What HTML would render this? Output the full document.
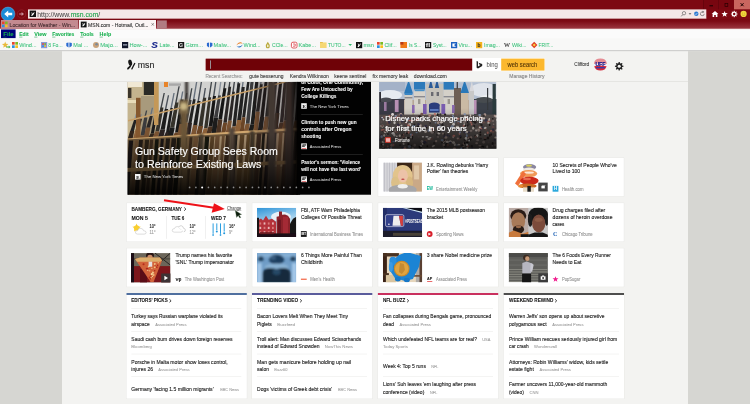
<!DOCTYPE html>
<html lang="en"><head><meta charset="utf-8"><title>MSN.com - Hotmail, Outlook</title>
<style>html,body{margin:0;padding:0;background:#f3f3f1;overflow:hidden}svg{display:block;will-change:transform}text{white-space:pre}</style>
</head><body>
<svg width="750" height="404" viewBox="0 0 750 404" font-family="'Liberation Sans', sans-serif">
<defs>
<linearGradient id="gtab" x1="0" y1="0" x2="0" y2="1"><stop offset="0" stop-color="#780610"/><stop offset="0.25" stop-color="#7e0c17"/><stop offset="1" stop-color="#9c3842"/></linearGradient>
<filter id="bl05" x="-5%" y="-5%" width="110%" height="110%"><feGaussianBlur stdDeviation="0.45"/></filter>
<filter id="bl1" x="-5%" y="-5%" width="110%" height="110%"><feGaussianBlur stdDeviation="0.8"/></filter>
<filter id="bl2" x="-5%" y="-5%" width="110%" height="110%"><feGaussianBlur stdDeviation="1.6"/></filter>
<clipPath id="pc1"><rect x="127.60" y="81.90" width="243.40" height="112.80"/></clipPath>
<linearGradient id="gblk" x1="0" y1="0" x2="1" y2="0"><stop offset="0" stop-color="#000" stop-opacity="0"/><stop offset="1" stop-color="#000" stop-opacity="1"/></linearGradient>
<linearGradient id="gbot" x1="0" y1="0" x2="0" y2="1"><stop offset="0" stop-color="#000" stop-opacity="0"/><stop offset="0.5" stop-color="#000" stop-opacity="0.4"/><stop offset="1" stop-color="#000" stop-opacity="0.9"/></linearGradient>
<clipPath id="pc2"><rect x="379.20" y="82.10" width="117.20" height="66.60"/></clipPath>
<linearGradient id="gdis" x1="0" y1="0" x2="0" y2="1"><stop offset="0" stop-color="#000" stop-opacity="0"/><stop offset="0.5" stop-color="#000" stop-opacity="0.3"/><stop offset="1" stop-color="#000" stop-opacity="0.72"/></linearGradient>
<clipPath id="pc3"><rect x="383.10" y="162.40" width="38.80" height="29.30"/></clipPath>
<clipPath id="pc4"><rect x="508.90" y="162.40" width="38.80" height="29.30"/></clipPath>
<linearGradient id="gsky" x1="0" y1="0" x2="0.3" y2="1"><stop offset="0" stop-color="#2f94d8"/><stop offset="0.5" stop-color="#9ccdec"/><stop offset="0.8" stop-color="#e4eef4"/></linearGradient>
<clipPath id="pc5"><rect x="257.00" y="207.80" width="39.20" height="29.20"/></clipPath>
<clipPath id="pc6"><rect x="382.90" y="207.80" width="39.20" height="29.20"/></clipPath>
<clipPath id="pc7"><rect x="508.70" y="207.80" width="39.20" height="29.20"/></clipPath>
<clipPath id="pc8"><rect x="131.00" y="253.10" width="39.40" height="29.40"/></clipPath>
<clipPath id="pc9"><rect x="257.00" y="253.10" width="39.20" height="29.20"/></clipPath>
<clipPath id="pc10"><rect x="382.90" y="253.10" width="39.20" height="29.20"/></clipPath>
<clipPath id="pc11"><rect x="508.70" y="253.10" width="39.20" height="29.20"/></clipPath>
</defs>
<rect x="0.00" y="0.00" width="750.00" height="404.00" fill="#f3f3f1" />
<rect x="0.00" y="0.00" width="750.00" height="19.20" fill="#7d0812" />
<rect x="0.00" y="19.00" width="750.00" height="9.90" fill="url(#gtab)" />
<rect x="0.00" y="28.70" width="750.00" height="0.60" fill="#dcb4b6" />
<rect x="703.50" y="0.00" width="14.50" height="9.30" fill="#780610" />
<rect x="718.50" y="0.00" width="15.00" height="9.30" fill="#780610" />
<line x1="703.50" y1="0.00" x2="703.50" y2="9.30" stroke="#5a040a" stroke-width="0.6" />
<line x1="718.50" y1="0.00" x2="718.50" y2="9.30" stroke="#5a040a" stroke-width="0.6" />
<rect x="734.00" y="0.00" width="16.00" height="9.30" fill="#c9665f" />
<line x1="709.50" y1="5.80" x2="713.00" y2="5.80" stroke="#1a0000" stroke-width="1" />
<rect x="725" y="3.6" width="2.8" height="2.8" fill="none" stroke="#2a0000" stroke-width="0.7"/>
<path d="M740.6 3.2 L743.6 6.2 M743.6 3.2 L740.6 6.2" stroke="#1a0000" stroke-width="1" fill="none"/>
<rect x="28.00" y="9.40" width="678.30" height="9.00" fill="#f4e7e7" />
<rect x="28.00" y="18.20" width="678.30" height="0.50" fill="#e8d0d0" />
<circle cx="8" cy="14" r="6.9" fill="#1b8bd6"/>
<circle cx="8" cy="14" r="6.9" fill="none" stroke="#6cb6e6" stroke-width="0.5"/>
<path d="M4.2 14 L8.2 10.4 L8.2 12.8 L12.2 12.8 L12.2 15.2 L8.2 15.2 L8.2 17.6 Z" fill="#fff"/>
<circle cx="21.5" cy="14" r="4.2" fill="#7a0811" stroke="#9a3038" stroke-width="0.5"/>
<path d="M19.2 13.4 L21.6 13.4 L21.6 12 L24 14 L21.6 16 L21.6 14.6 L19.2 14.6 Z" fill="#c9909a"/>
<rect x="29.60" y="10.60" width="6.40" height="6.40" fill="#111" />
<path d="M31.39 11.88 q1.28 0.64 1.28 2.24 q0.64 -1.92 1.92 -2.24 q-0.32 2.56 -2.24 3.84 q-0.96 0.32 -1.28 -0.32 q0.96 -0.64 0.77 -1.28 Z" fill="#fff"/>
<text x="37.30" y="16.55" font-size="7" fill="#3a3a3a" textLength="33.38" lengthAdjust="spacingAndGlyphs" >http://www.</text>
<text x="70.68" y="16.55" font-size="7" fill="#1aa34a" stroke="#1aa34a" stroke-width="0.1" textLength="27.68" lengthAdjust="spacingAndGlyphs" >msn.com</text>
<text x="98.36" y="16.55" font-size="7" fill="#3a3a3a" textLength="1.90" lengthAdjust="spacingAndGlyphs" >/</text>
<circle cx="684" cy="13.2" r="1.7" fill="none" stroke="#555" stroke-width="0.6"/>
<line x1="682.80" y1="14.60" x2="681.20" y2="16.40" stroke="#555" stroke-width="0.7" />
<path d="M688.6 13.2 L691.4 13.2 L690 14.8 Z" fill="#555"/>
<circle cx="696.3" cy="13.7" r="2.2" fill="#2a78d2"/>
<path d="M695.2 13.7 L696 14.6 L697.5 12.8" stroke="#fff" stroke-width="0.6" fill="none"/>
<path d="M704.2 13.8 a1.9 1.9 0 1 1 -1.2 -1.75" stroke="#555" stroke-width="0.6" fill="none"/>
<path d="M702.6 10.8 L704.3 12 L702.5 12.9 Z" fill="#555"/>
<path d="M715 11 L718.4 14 L717.4 14 L717.4 17 L715.8 17 L715.8 15 L714.2 15 L714.2 17 L712.6 17 L712.6 14 L711.6 14 Z" fill="#fff"/>
<polygon points="724.60,10.90 725.41,13.08 727.74,13.18 725.92,14.63 726.54,16.87 724.60,15.59 722.66,16.87 723.28,14.63 721.46,13.18 723.79,13.08" fill="#fff"/>
<polygon points="737.47,13.57 737.47,14.43 736.49,14.62 736.26,15.19 736.82,16.01 736.21,16.62 735.39,16.06 734.82,16.29 734.63,17.27 733.77,17.27 733.58,16.29 733.01,16.06 732.19,16.62 731.58,16.01 732.14,15.19 731.91,14.62 730.93,14.43 730.93,13.57 731.91,13.38 732.14,12.81 731.58,11.99 732.19,11.38 733.01,11.94 733.58,11.71 733.77,10.73 734.63,10.73 734.82,11.71 735.39,11.94 736.21,11.38 736.82,11.99 736.26,12.81 736.49,13.38" fill="#fff"/>
<circle cx="734.2" cy="14" r="1.19" fill="#7d0812"/>
<circle cx="743.6" cy="13.9" r="3.1" fill="#f2d43c"/>
<circle cx="742.6" cy="13.1" r="0.4" fill="#a8861a"/><circle cx="744.6" cy="13.1" r="0.4" fill="#a8861a"/>
<path d="M742 14.8 q1.6 1.4 3.2 0" stroke="#a8861a" stroke-width="0.4" fill="none"/>
<rect x="1.00" y="20.20" width="77.30" height="8.60" fill="#c38a90" />
<rect x="1.00" y="20.20" width="77.30" height="0.50" fill="#d3a4a8" />
<rect x="2.00" y="21.60" width="2.50" height="2.50" fill="#e8452c" />
<rect x="5.10" y="21.60" width="2.50" height="2.50" fill="#7cbb20" />
<rect x="2.00" y="24.70" width="2.50" height="2.50" fill="#2a90e0" />
<rect x="5.10" y="24.70" width="2.50" height="2.50" fill="#f8c020" />
<text x="9.60" y="26.77" font-size="6.2" fill="#4a3034" stroke="#4a3034" stroke-width="0.13" textLength="65.50" lengthAdjust="spacingAndGlyphs" >Location for Weather - Win...</text>
<rect x="79.00" y="20.00" width="77.00" height="9.30" fill="#fbf5f5" />
<rect x="80.80" y="21.60" width="5.80" height="5.80" fill="#111" />
<path d="M82.42 22.76 q1.16 0.58 1.16 2.03 q0.58 -1.74 1.74 -2.03 q-0.29 2.32 -2.03 3.48 q-0.87 0.29 -1.16 -0.29 q0.87 -0.58 0.70 -1.16 Z" fill="#fff"/>
<text x="88.00" y="26.77" font-size="6.2" fill="#333" stroke="#333" stroke-width="0.13" textLength="60.50" lengthAdjust="spacingAndGlyphs" >MSN.com - Hotmail, Outl...</text>
<path d="M151.6 23.2 L153.8 25.6 M153.8 23.2 L151.6 25.6" stroke="#555" stroke-width="0.6" fill="none"/>
<rect x="157.00" y="20.40" width="9.80" height="8.20" fill="#b17c83" />
<rect x="0.00" y="29.30" width="750.00" height="9.40" fill="#fbfbfb" />
<rect x="0.00" y="38.70" width="750.00" height="12.00" fill="#f8f8f7" />
<rect x="1.00" y="29.40" width="14.60" height="8.70" fill="#00007a" />
<text x="3.30" y="36.07" font-size="6.2" fill="#17b04e" stroke="#17b04e" stroke-width="0.06" font-weight="bold" textLength="10.40" lengthAdjust="spacingAndGlyphs" >File</text>
<line x1="3.30" y1="37.10" x2="6.50" y2="37.10" stroke="#0e8a3a" stroke-width="0.5" />
<text x="19.20" y="36.07" font-size="6.2" fill="#17b04e" stroke="#17b04e" stroke-width="0.06" font-weight="bold" textLength="9.40" lengthAdjust="spacingAndGlyphs" >Edit</text>
<line x1="19.20" y1="37.10" x2="22.40" y2="37.10" stroke="#0e8a3a" stroke-width="0.5" />
<text x="34.20" y="36.07" font-size="6.2" fill="#17b04e" stroke="#17b04e" stroke-width="0.06" font-weight="bold" textLength="12.40" lengthAdjust="spacingAndGlyphs" >View</text>
<line x1="34.20" y1="37.10" x2="37.40" y2="37.10" stroke="#0e8a3a" stroke-width="0.5" />
<text x="52.20" y="36.07" font-size="6.2" fill="#17b04e" stroke="#17b04e" stroke-width="0.06" font-weight="bold" textLength="22.20" lengthAdjust="spacingAndGlyphs" >Favorites</text>
<line x1="52.20" y1="37.10" x2="55.40" y2="37.10" stroke="#0e8a3a" stroke-width="0.5" />
<text x="80.20" y="36.07" font-size="6.2" fill="#17b04e" stroke="#17b04e" stroke-width="0.06" font-weight="bold" textLength="13.60" lengthAdjust="spacingAndGlyphs" >Tools</text>
<line x1="80.20" y1="37.10" x2="83.40" y2="37.10" stroke="#0e8a3a" stroke-width="0.5" />
<text x="99.60" y="36.07" font-size="6.2" fill="#17b04e" stroke="#17b04e" stroke-width="0.06" font-weight="bold" textLength="11.60" lengthAdjust="spacingAndGlyphs" >Help</text>
<line x1="99.60" y1="37.10" x2="102.80" y2="37.10" stroke="#0e8a3a" stroke-width="0.5" />
<polygon points="5.20,41.60 6.04,43.84 8.43,43.95 6.56,45.44 7.20,47.75 5.20,46.43 3.20,47.75 3.84,45.44 1.97,43.95 4.36,43.84" fill="#e9b93a"/>
<path d="M6.2 46.4 h2.6 v-0.9 l1.6 1.5 l-1.6 1.5 v-0.9 h-2.6 Z" fill="#3cb043"/>
<rect x="12.00" y="42.00" width="2.70" height="2.70" fill="#e8452c" />
<rect x="15.30" y="42.00" width="2.70" height="2.70" fill="#7cbb20" />
<rect x="12.00" y="45.30" width="2.70" height="2.70" fill="#2a90e0" />
<rect x="15.30" y="45.30" width="2.70" height="2.70" fill="#f8c020" />
<text x="19.20" y="47.17" font-size="6.2" fill="#36c078" stroke="#36c078" stroke-width="0.05" textLength="17.40" lengthAdjust="spacingAndGlyphs" >Wind...</text>
<rect x="41.00" y="42.00" width="6.20" height="6.20" fill="#8a9ad8" />
<rect x="42.20" y="43.20" width="1.60" height="1.60" fill="#e8452c" />
<rect x="44.40" y="43.20" width="1.60" height="1.60" fill="#7cbb20" />
<rect x="42.20" y="45.40" width="1.60" height="1.60" fill="#2a90e0" />
<rect x="44.40" y="45.40" width="1.60" height="1.60" fill="#f8c020" />
<text x="48.20" y="47.17" font-size="6.2" fill="#36c078" stroke="#36c078" stroke-width="0.05" textLength="14.40" lengthAdjust="spacingAndGlyphs" >8 Fo...</text>
<path d="M66.3 43 l2.2 -0.6 v5 l-2.2 -1.4 Z M69.4 42.4 l2.4 0.6 v3 l-2.4 1.6 Z" fill="#2a6ad0"/>
<text x="73.30" y="47.17" font-size="6.2" fill="#36c078" stroke="#36c078" stroke-width="0.05" textLength="15.00" lengthAdjust="spacingAndGlyphs" >Mal ...</text>
<circle cx="96" cy="45" r="3" fill="#c9a27a"/><circle cx="96.6" cy="44.2" r="1.3" fill="#7a8a98"/>
<text x="100.20" y="47.17" font-size="6.2" fill="#36c078" stroke="#36c078" stroke-width="0.05" textLength="17.60" lengthAdjust="spacingAndGlyphs" >Majo...</text>
<rect x="122.00" y="42.00" width="6.20" height="6.20" fill="#10162a" />
<rect x="123.00" y="44.40" width="4.20" height="1.00" fill="#c8d0e0" />
<text x="129.40" y="47.17" font-size="6.2" fill="#36c078" stroke="#36c078" stroke-width="0.05" textLength="18.00" lengthAdjust="spacingAndGlyphs" >How-...</text>
<text x="151.20" y="47.98" font-size="8.5" fill="#14248a" stroke="#14248a" stroke-width="0.06" font-weight="bold" textLength="6.60" lengthAdjust="spacingAndGlyphs" font-style="italic">S</text>
<text x="159.60" y="47.17" font-size="6.2" fill="#36c078" stroke="#36c078" stroke-width="0.05" textLength="15.00" lengthAdjust="spacingAndGlyphs" >Late...</text>
<rect x="178.00" y="42.00" width="6.20" height="6.20" fill="#161616" />
<text x="179.10" y="46.99" font-size="5.4" fill="#e0e0e0" stroke="#e0e0e0" stroke-width="0.06" font-weight="bold" textLength="4.00" lengthAdjust="spacingAndGlyphs" >G</text>
<text x="185.40" y="47.17" font-size="6.2" fill="#36c078" stroke="#36c078" stroke-width="0.05" textLength="17.60" lengthAdjust="spacingAndGlyphs" >Gizm...</text>
<path d="M206.9 43 l2.2 -0.6 v5 l-2.2 -1.4 Z M210.0 42.4 l2.4 0.6 v3 l-2.4 1.6 Z" fill="#2a6ad0"/>
<text x="213.60" y="47.17" font-size="6.2" fill="#36c078" stroke="#36c078" stroke-width="0.05" textLength="17.60" lengthAdjust="spacingAndGlyphs" >Malw...</text>
<path d="M236.2 45.6 q3.2 -5.4 6.6 -1.8 q-3 -1.6 -6.6 1.8 Z" fill="#e87a1c"/><path d="M236.6 46.2 q3.4 3.4 6.4 -1.6 q-3.2 2.6 -6.4 1.6Z" fill="#2a72c8"/>
<text x="243.60" y="47.17" font-size="6.2" fill="#36c078" stroke="#36c078" stroke-width="0.05" textLength="17.00" lengthAdjust="spacingAndGlyphs" >Wind...</text>
<path d="M267.8 41.8 q2.6 3 1.8 5.6 q-1.8 1.8 -3.6 0 q-0.8 -2.6 1.8 -5.6 Z" fill="#b8a83a"/><path d="M267.8 44 q1.2 1.6 0.8 2.8 q-0.8 0.8 -1.6 0 q-0.4 -1.2 0.8 -2.8Z" fill="#f4f0d0"/>
<text x="272.00" y="47.17" font-size="6.2" fill="#36c078" stroke="#36c078" stroke-width="0.05" textLength="15.60" lengthAdjust="spacingAndGlyphs" >CCle...</text>
<rect x="291.4" y="42.2" width="5.6" height="5.8" rx="1.6" fill="#fff" stroke="#d8323a" stroke-width="0.8"/><path d="M293 44 h2.2 v2.2 h-2.2" stroke="#d8323a" stroke-width="0.7" fill="none"/>
<text x="298.60" y="47.17" font-size="6.2" fill="#36c078" stroke="#36c078" stroke-width="0.05" textLength="17.40" lengthAdjust="spacingAndGlyphs" >Kabe...</text>
<rect x="320.00" y="42.40" width="6.60" height="5.60" fill="#f6d874" />
<rect x="320.00" y="42.00" width="2.80" height="1.00" fill="#e8c050" />
<text x="328.00" y="47.17" font-size="6.2" fill="#36c078" stroke="#36c078" stroke-width="0.05" textLength="17.60" lengthAdjust="spacingAndGlyphs" >TUTO...</text>
<path d="M348.4 44 L352 44 L350.2 46 Z" fill="#34bd72"/>
<rect x="356.00" y="42.00" width="6.20" height="6.20" fill="#111" />
<path d="M357.74 43.24 q1.24 0.62 1.24 2.17 q0.62 -1.86 1.86 -2.17 q-0.31 2.48 -2.17 3.72 q-0.93 0.31 -1.24 -0.31 q0.93 -0.62 0.74 -1.24 Z" fill="#fff"/>
<text x="363.40" y="47.17" font-size="6.2" fill="#36c078" stroke="#36c078" stroke-width="0.05" textLength="10.60" lengthAdjust="spacingAndGlyphs" >msn</text>
<rect x="377.00" y="42.00" width="2.70" height="2.70" fill="#e8452c" />
<rect x="380.30" y="42.00" width="2.70" height="2.70" fill="#7cbb20" />
<rect x="377.00" y="45.30" width="2.70" height="2.70" fill="#2a90e0" />
<rect x="380.30" y="45.30" width="2.70" height="2.70" fill="#f8c020" />
<text x="384.40" y="47.17" font-size="6.2" fill="#36c078" stroke="#36c078" stroke-width="0.05" textLength="12.40" lengthAdjust="spacingAndGlyphs" >Clif...</text>
<rect x="400.40" y="42.00" width="6.60" height="6.00" fill="#f07818" />
<rect x="400.40" y="42.00" width="3.00" height="2.60" fill="#b83a18" />
<text x="409.00" y="47.17" font-size="6.2" fill="#36c078" stroke="#36c078" stroke-width="0.05" textLength="12.20" lengthAdjust="spacingAndGlyphs" >Is S...</text>
<rect x="425.00" y="42.00" width="6.20" height="6.20" fill="#141414" />
<text x="425.80" y="46.85" font-size="5" fill="#eee" stroke="#eee" stroke-width="0.06" font-weight="bold" textLength="4.40" lengthAdjust="spacingAndGlyphs" >fl</text>
<text x="433.00" y="47.17" font-size="6.2" fill="#36c078" stroke="#36c078" stroke-width="0.05" textLength="13.60" lengthAdjust="spacingAndGlyphs" >Syst...</text>
<rect x="451.00" y="42.00" width="6.20" height="6.20" fill="#1c62c2" />
<path d="M452.4 43.4 h3.6 l-2 1.7 l2 1.7 h-3.6 Z" fill="#fff"/>
<text x="458.40" y="47.17" font-size="6.2" fill="#36c078" stroke="#36c078" stroke-width="0.05" textLength="13.60" lengthAdjust="spacingAndGlyphs" >Viru...</text>
<rect x="476.00" y="42.00" width="6.20" height="6.20" fill="#f4b21c" />
<text x="477.60" y="46.96" font-size="5.6" fill="#333" stroke="#333" stroke-width="0.06" font-weight="bold" textLength="3.00" lengthAdjust="spacingAndGlyphs" >b</text>
<text x="484.00" y="47.17" font-size="6.2" fill="#36c078" stroke="#36c078" stroke-width="0.05" textLength="16.00" lengthAdjust="spacingAndGlyphs" >Imag...</text>
<text x="504.00" y="47.34" font-size="6.4" fill="#333" stroke="#333" stroke-width="0.13" textLength="6.00" lengthAdjust="spacingAndGlyphs" font-family="'Liberation Serif', serif">W</text>
<text x="512.00" y="47.17" font-size="6.2" fill="#36c078" stroke="#36c078" stroke-width="0.05" textLength="14.60" lengthAdjust="spacingAndGlyphs" >Wiki...</text>
<path d="M534.2 41.8 l3.2 3.2 l-3.2 3.2 l-3.2 -3.2 Z" fill="#e03a20"/><path d="M534.2 43.4 l1.6 1.6 l-1.6 1.6 l-1.6 -1.6 Z" fill="#f8d040"/>
<text x="538.60" y="47.17" font-size="6.2" fill="#36c078" stroke="#36c078" stroke-width="0.05" textLength="14.60" lengthAdjust="spacingAndGlyphs" >FRIT...</text>
<rect x="0.00" y="50.50" width="750.00" height="0.80" fill="#a8a8a8" />
<rect x="0.00" y="51.30" width="62.00" height="352.70" fill="#d6d6d2" />
<rect x="688.00" y="51.30" width="62.00" height="352.70" fill="#d6d6d2" />
<rect x="62.00" y="51.30" width="626.00" height="352.70" fill="#f3f3f1" />
<rect x="62.00" y="81.00" width="626.00" height="0.70" fill="#dededc" />
<ellipse cx="130.2" cy="62.7" rx="1.9" ry="3.1" transform="rotate(-12 130.2 62.7)" fill="#161616"/>
<path d="M132 63.6 Q131.4 67 128.6 69.3 Q127.2 70 127.1 68.7 Q127.3 67.5 128.9 66.6 Q130 65.6 130.2 64 Z" fill="#161616"/>
<path d="M134.3 62.7 L135.5 63.2 L132.3 69.5 L131 69.2 Z" fill="#161616"/>
<text x="137.70" y="67.80" font-size="9.3" fill="#1e1e1e" stroke="#1e1e1e" stroke-width="0.12" textLength="16.60" lengthAdjust="spacingAndGlyphs" >msn</text>
<rect x="205.00" y="58.00" width="340.00" height="13.20" fill="#fff" />
<rect x="205.60" y="58.60" width="266.60" height="12.00" fill="#6f0207" />
<rect x="210.30" y="60.40" width="0.60" height="8.40" fill="#b8f0f4" />
<path d="M476.6 61 l1.4 0.5 v5 l2.4 -1.4 l-1.1 -0.6 l-0.7 -1.7 l3.6 1.3 v1.9 l-4.2 2.6 l-1.4 -0.9 Z" fill="#222"/>
<text x="486.60" y="67.40" font-size="7.0" fill="#4a4a4a" textLength="11.20" lengthAdjust="spacingAndGlyphs" >bing</text>
<rect x="501.20" y="58.60" width="43.30" height="12.00" fill="#fcb82e" />
<text x="507.60" y="67.24" font-size="6.4" fill="#5a3a08" stroke="#5a3a08" stroke-width="0.13" textLength="29.60" lengthAdjust="spacingAndGlyphs" >web search</text>
<text x="205.40" y="77.90" font-size="5.0" fill="#9a9a9a" stroke="#9a9a9a" stroke-width="0.13" textLength="37.20" lengthAdjust="spacingAndGlyphs" >Recent Searches:</text>
<text x="249.30" y="77.90" font-size="5.0" fill="#444" stroke="#444" stroke-width="0.13" textLength="34.20" lengthAdjust="spacingAndGlyphs" >gute besserung</text>
<text x="289.80" y="77.90" font-size="5.0" fill="#444" stroke="#444" stroke-width="0.13" textLength="39.00" lengthAdjust="spacingAndGlyphs" >Kendra Wilkinson</text>
<text x="334.30" y="77.90" font-size="5.0" fill="#444" stroke="#444" stroke-width="0.13" textLength="32.00" lengthAdjust="spacingAndGlyphs" >keene sentinel</text>
<text x="372.60" y="77.90" font-size="5.0" fill="#444" stroke="#444" stroke-width="0.13" textLength="35.60" lengthAdjust="spacingAndGlyphs" >fix memory leak</text>
<text x="413.80" y="77.90" font-size="5.0" fill="#444" stroke="#444" stroke-width="0.13" textLength="33.10" lengthAdjust="spacingAndGlyphs" >download.com</text>
<text x="544.50" y="77.90" font-size="5.0" fill="#8a8a8a" stroke="#8a8a8a" stroke-width="0.13" text-anchor="end" textLength="35.20" lengthAdjust="spacingAndGlyphs" >Manage History</text>
<text x="574.20" y="66.48" font-size="4.8" fill="#333" stroke="#333" stroke-width="0.06" textLength="15.00" lengthAdjust="spacingAndGlyphs" >Clifford</text>
<ellipse cx="600.4" cy="64.5" rx="6.6" ry="5.9" fill="#f4f0f6"/>
<path d="M594 63 q1 -4.4 6.4 -4.4 q5.4 0 6.4 4.4 l0 1 q-6.4 -1.6 -12.8 0 Z" fill="#d83a44" opacity="0.55"/>
<path d="M594.2 66.2 q6 -1.6 12.4 0 q-1 4.2 -6.2 4.2 q-5.2 0 -6.2 -4.2 Z" fill="#d62a3a"/>
<text x="595.40" y="65.60" font-size="5.6" fill="#1c1c8c" stroke="#1c1c8c" stroke-width="0.25" font-weight="bold" textLength="10.00" lengthAdjust="spacingAndGlyphs" >UFF</text>
<rect x="596.00" y="67.00" width="8.80" height="1.40" fill="#3a3aa8" />
<polygon points="623.46,65.74 623.46,66.86 622.19,67.10 621.88,67.85 622.61,68.92 621.82,69.71 620.75,68.98 620.00,69.29 619.76,70.56 618.64,70.56 618.40,69.29 617.65,68.98 616.58,69.71 615.79,68.92 616.52,67.85 616.21,67.10 614.94,66.86 614.94,65.74 616.21,65.50 616.52,64.75 615.79,63.68 616.58,62.89 617.65,63.62 618.40,63.31 618.64,62.04 619.76,62.04 620.00,63.31 620.75,63.62 621.82,62.89 622.61,63.68 621.88,64.75 622.19,65.50" fill="#222"/>
<circle cx="619.2" cy="66.3" r="1.55" fill="#f3f3f1"/>
<g clip-path="url(#pc1)">
<rect x="127.60" y="81.90" width="243.40" height="112.80" fill="#d2d2d0" />
<g filter="url(#bl05)">
<rect x="127.00" y="81.00" width="32.00" height="62.00" fill="#c4b48e" />
<rect x="128.00" y="82.00" width="14.00" height="5.00" fill="#f0e8d4" />
<rect x="128.00" y="88.00" width="3.40" height="10.00" fill="#3a342c" />
<rect x="127.00" y="100.00" width="9.00" height="3.00" fill="#e8dcb8" />
<rect x="141.00" y="96.00" width="13.00" height="46.00" fill="#a89a7c" />
<rect x="143.80" y="81.00" width="11.60" height="14.00" fill="#2a2c28" />
<rect x="164.00" y="82.00" width="4.00" height="5.00" fill="#e8842c" />
<rect x="169.00" y="83.40" width="12.00" height="2.40" fill="#a8a8a8" />
<polygon points="135.73,113.74 137.03,113.74 135.50,120.00 134.00,120.00" fill="#8a929c" />
<polygon points="134.00,120.00 136.72,120.00 133.91,131.05 130.28,131.05" fill="#242424" />
<polygon points="130.08,131.05 134.31,131.05 132.43,139.50 127.60,139.50" fill="#30261e" />
<polygon points="140.43,114.20 141.73,114.20 140.76,118.67 139.26,118.67" fill="#7a8490" />
<polygon points="139.26,118.67 142.01,118.67 139.20,129.96 135.54,129.96" fill="#242424" />
<polygon points="135.34,129.96 139.60,129.96 137.72,139.21 132.86,139.21" fill="#8c6038" />
<polygon points="145.93,110.45 147.23,110.45 145.68,117.42 144.18,117.42" fill="#3e4246" />
<polygon points="144.18,117.42 147.36,117.42 144.71,135.45 140.46,135.45" fill="#3a3a3c" />
<polygon points="140.26,135.45 145.11,135.45 143.23,138.94 137.78,138.94" fill="#7a5232" />
<polygon points="151.79,107.83 153.09,107.83 151.34,115.99 149.84,115.99" fill="#66707c" />
<polygon points="149.84,115.99 152.74,115.99 149.98,127.78 146.12,127.78" fill="#2a2826" />
<polygon points="145.92,127.78 150.38,127.78 148.50,138.63 143.44,138.63" fill="#7a5232" />
<polygon points="155.76,109.19 157.06,109.19 155.97,114.82 154.47,114.82" fill="#8a929c" />
<polygon points="154.47,114.82 156.97,114.82 154.09,133.54 150.75,133.54" fill="#1e1e1e" />
<polygon points="150.55,133.54 154.49,133.54 152.61,138.37 148.07,138.37" fill="#30261e" />
<polygon points="163.59,93.04 164.89,93.04 160.53,113.67 159.03,113.67" fill="#3e4246" />
<polygon points="160.57,107.41 163.49,107.41 159.21,131.50 155.31,131.50" fill="#34302c" />
<polygon points="155.11,131.50 159.61,131.50 157.73,138.12 152.63,138.12" fill="#7a5232" />
<polygon points="167.84,95.21 169.14,95.21 165.70,112.36 164.20,112.36" fill="#4a5058" />
<polygon points="164.97,109.12 168.19,109.12 164.79,129.67 160.48,129.67" fill="#1e1e1e" />
<polygon points="160.28,129.67 165.19,129.67 163.31,137.84 157.80,137.84" fill="#2a2220" />
<polygon points="173.42,93.08 174.72,93.08 171.30,110.94 169.80,110.94" fill="#66707c" />
<polygon points="170.47,107.94 172.84,107.94 169.23,132.12 166.08,132.12" fill="#1e1e1e" />
<polygon points="165.88,132.12 169.63,132.12 167.75,137.53 163.40,137.53" fill="#2a2220" />
<polygon points="178.44,86.14 179.74,86.14 175.24,109.95 173.74,109.95" fill="#3e4246" />
<polygon points="175.39,102.42 178.60,102.42 174.29,127.65 170.02,127.65" fill="#34302c" />
<polygon points="169.82,127.65 174.69,127.65 172.81,137.31 167.34,137.31" fill="#1e1c1a" />
<polygon points="182.05,91.56 183.35,91.56 180.29,108.67 178.79,108.67" fill="#66707c" />
<polygon points="180.71,99.60 183.67,99.60 179.02,132.42 175.07,132.42" fill="#161616" />
<polygon points="174.87,132.42 179.42,132.42 177.54,137.04 172.39,137.04" fill="#6a4426" />
<polygon points="186.09,92.90 187.39,92.90 184.90,107.50 183.40,107.50" fill="#3e4246" />
<polygon points="184.93,100.03 187.44,100.03 183.03,123.96 179.68,123.96" fill="#1e1e1e" />
<polygon points="179.48,123.96 183.43,123.96 181.55,136.78 177.00,136.78" fill="#7a5232" />
<polygon points="191.13,88.18 192.43,88.18 189.37,106.37 187.87,106.37" fill="#3e4246" />
<polygon points="189.14,100.00 191.59,100.00 187.42,122.68 184.15,122.68" fill="#3a3a3c" />
<polygon points="183.95,122.68 187.82,122.68 185.94,136.54 181.47,136.54" fill="#8c6038" />
<polygon points="196.12,81.36 197.42,81.36 193.44,105.34 191.94,105.34" fill="#66707c" />
<polygon points="193.13,99.19 195.66,99.19 191.60,123.11 188.22,123.11" fill="#242424" />
<polygon points="188.02,123.11 192.00,123.11 190.12,136.31 185.54,136.31" fill="#2a2220" />
<polygon points="200.91,81.00 202.21,81.00 198.51,104.06 197.01,104.06" fill="#4a5058" />
<polygon points="197.59,100.98 200.51,100.98 197.19,124.99 193.29,124.99" fill="#1e1e1e" />
<polygon points="193.09,124.99 197.59,124.99 195.71,136.03 190.61,136.03" fill="#7a5232" />
<polygon points="204.68,87.99 205.98,87.99 203.77,102.73 202.27,102.73" fill="#4a5058" />
<polygon points="203.16,97.78 206.29,97.78 202.71,125.97 198.55,125.97" fill="#34302c" />
<polygon points="198.35,125.97 203.11,125.97 201.23,135.75 195.87,135.75" fill="#6a4426" />
<polygon points="210.99,81.00 212.29,81.00 209.27,101.34 207.77,101.34" fill="#3e4246" />
<polygon points="208.49,97.25 211.13,97.25 207.57,128.33 204.05,128.33" fill="#34302c" />
<polygon points="203.85,128.33 207.97,128.33 206.09,135.44 201.37,135.44" fill="#8c6038" />
<polygon points="215.29,81.00 216.59,81.00 213.83,100.18 212.33,100.18" fill="#4a5058" />
<polygon points="213.06,95.91 215.97,95.91 212.49,126.58 208.61,126.58" fill="#161616" />
<polygon points="208.41,126.58 212.89,126.58 211.01,135.19 205.93,135.19" fill="#4a3220" />
<polygon points="220.26,81.00 221.56,81.00 219.09,98.85 217.59,98.85" fill="#8a929c" />
<polygon points="218.15,95.47 220.98,95.47 217.65,117.87 213.87,117.87" fill="#3a3a3c" />
<polygon points="213.67,117.87 218.05,117.87 216.17,134.90 211.19,134.90" fill="#1e1c1a" />
<polygon points="224.46,81.00 225.76,81.00 223.52,97.73 222.02,97.73" fill="#3e4246" />
<polygon points="223.58,88.14 226.36,88.14 222.02,119.52 218.30,119.52" fill="#161616" />
<polygon points="218.10,119.52 222.42,119.52 220.54,134.66 215.62,134.66" fill="#4a3220" />
<polygon points="229.24,81.19 230.54,81.19 228.57,96.45 227.07,96.45" fill="#3e4246" />
<polygon points="228.62,86.63 231.18,86.63 226.76,122.84 223.35,122.84" fill="#2a2826" />
<polygon points="223.15,122.84 227.16,122.84 225.28,134.38 220.67,134.38" fill="#6a4426" />
<polygon points="233.82,81.00 235.12,81.00 233.34,95.25 231.84,95.25" fill="#3e4246" />
<polygon points="232.38,91.76 234.92,91.76 231.51,120.75 228.12,120.75" fill="#2a2826" />
<polygon points="227.92,120.75 231.91,120.75 230.03,134.12 225.44,134.12" fill="#7a5232" />
<polygon points="237.78,81.00 239.08,81.00 237.48,94.20 235.98,94.20" fill="#4a5058" />
<polygon points="237.62,83.36 240.26,83.36 235.78,126.42 232.26,126.42" fill="#242424" />
<polygon points="232.06,126.42 236.18,126.42 234.30,133.89 229.58,133.89" fill="#8c6038" />
<polygon points="242.50,81.00 243.80,81.00 242.42,92.95 240.92,92.95" fill="#66707c" />
<polygon points="241.78,87.09 244.76,87.09 241.16,120.04 237.20,120.04" fill="#242424" />
<polygon points="237.00,120.04 241.56,120.04 239.68,133.62 234.52,133.62" fill="#8c6038" />
<polygon points="247.21,81.00 248.51,81.00 247.32,91.71 245.82,91.71" fill="#7a8490" />
<polygon points="247.40,80.71 249.69,80.71 245.15,117.18 242.10,117.18" fill="#242424" />
<polygon points="241.90,117.18 245.55,117.18 243.67,133.35 239.42,133.35" fill="#6a4426" />
<polygon points="250.72,81.00 252.02,81.00 250.97,90.79 249.47,90.79" fill="#4a5058" />
<polygon points="250.93,80.47 253.76,80.47 249.52,123.73 245.75,123.73" fill="#3a3a3c" />
<polygon points="245.55,123.73 249.92,123.73 248.04,133.15 243.07,133.15" fill="#7a5232" />
<polygon points="255.30,81.00 256.60,81.00 255.73,89.58 254.23,89.58" fill="#66707c" />
<polygon points="255.28,82.00 258.25,82.00 254.47,124.32 250.51,124.32" fill="#1e1e1e" />
<polygon points="250.31,124.32 254.87,124.32 252.99,132.89 247.83,132.89" fill="#1e1c1a" />
<polygon points="260.44,81.00 261.74,81.00 261.06,88.23 259.56,88.23" fill="#66707c" />
<polygon points="260.09,84.31 262.75,84.31 259.38,111.82 255.84,111.82" fill="#242424" />
<polygon points="255.64,111.82 259.78,111.82 257.90,132.59 253.16,132.59" fill="#7a5232" />
<polygon points="264.69,81.00 265.99,81.00 265.46,87.12 263.96,87.12" fill="#8a929c" />
<polygon points="264.85,80.42 267.54,80.42 263.82,116.98 260.24,116.98" fill="#161616" />
<polygon points="260.04,116.98 264.22,116.98 262.34,132.35 257.56,132.35" fill="#1e1c1a" />
<polygon points="269.37,81.00 270.67,81.00 270.30,85.90 268.80,85.90" fill="#66707c" />
<polygon points="269.43,81.05 272.22,81.05 268.81,116.77 265.08,116.77" fill="#242424" />
<polygon points="264.88,116.77 269.21,116.77 267.33,132.09 262.40,132.09" fill="#7a5232" />
<polygon points="274.41,81.00 275.71,81.00 275.50,84.58 274.00,84.58" fill="#66707c" />
<polygon points="274.53,80.43 277.30,80.43 273.98,114.27 270.28,114.27" fill="#242424" />
<polygon points="270.08,114.27 274.38,114.27 272.50,131.80 267.60,131.80" fill="#30261e" />
<polygon points="279.31,81.00 280.61,81.00 280.56,83.30 279.06,83.30" fill="#4a5058" />
<polygon points="280.09,74.97 282.89,74.97 279.06,112.93 275.34,112.93" fill="#161616" />
<polygon points="275.14,112.93 279.46,112.93 277.58,131.52 272.66,131.52" fill="#30261e" />
<polygon points="283.69,81.00 284.99,81.00 285.06,82.16 283.56,82.16" fill="#8a929c" />
<polygon points="284.13,77.48 286.83,77.48 283.44,122.55 279.84,122.55" fill="#2a2826" />
<polygon points="279.64,122.55 283.84,122.55 281.96,131.27 277.16,131.27" fill="#4a3220" />
<polygon points="287.86,81.00 289.16,81.00 289.35,81.08 287.85,81.08" fill="#7a8490" />
<polygon points="288.32,77.17 290.94,77.17 287.62,120.43 284.13,120.43" fill="#1e1e1e" />
<polygon points="283.93,120.43 288.02,120.43 286.14,131.04 281.45,131.04" fill="#6a4426" />
<polygon points="292.40,81.00 293.70,81.00 294.00,80.00 292.50,80.00" fill="#3e4246" />
<polygon points="293.53,71.27 296.76,71.27 293.08,117.34 288.78,117.34" fill="#34302c" />
<polygon points="288.58,117.34 293.48,117.34 291.60,130.78 286.10,130.78" fill="#1e1c1a" />
<polygon points="298.37,81.00 299.67,81.00 299.98,80.00 298.48,80.00" fill="#7a8490" />
<polygon points="298.87,76.67 301.78,76.67 298.63,120.64 294.76,120.64" fill="#161616" />
<polygon points="294.56,120.64 299.03,120.64 297.15,130.45 292.08,130.45" fill="#6a4426" />
<polygon points="303.74,81.00 305.04,81.00 305.34,80.00 303.84,80.00" fill="#3e4246" />
<polygon points="304.23,76.80 307.08,76.80 303.92,113.06 300.12,113.06" fill="#161616" />
<polygon points="299.92,113.06 304.32,113.06 302.44,130.16 297.44,130.16" fill="#7a5232" />
<rect x="136.00" y="97.80" width="4.60" height="98.00" fill="#85582f" />
<rect x="154.00" y="81.00" width="4.40" height="44.00" fill="#c49858" />
<polygon points="128.00,120.00 290.00,80.00 290.00,81.60 128.00,121.60" fill="#c8a068" />
<polygon points="126.00,138.41 300.00,127.44 300.00,132.44 126.00,142.81" fill="#cfa66e" />
<polygon points="126.00,139.61 300.00,130.04 300.00,196.00 126.00,196.00" fill="#6e583c" />
<polygon points="196.00,137.76 296.00,132.26 296.00,166.00 196.00,170.00" fill="#a89070" />
<polygon points="129.00,140.61 133.16,140.61 128.66,196.00 124.50,196.00" fill="#1a1612" />
<polygon points="135.35,140.26 138.18,140.26 133.68,196.00 130.85,196.00" fill="#6a4e30" />
<polygon points="139.00,140.06 142.91,140.06 138.41,196.00 134.50,196.00" fill="#201a14" />
<polygon points="145.13,139.72 149.09,139.72 144.59,196.00 140.63,196.00" fill="#2a2018" />
<polygon points="150.09,139.45 153.21,139.45 148.71,196.00 145.59,196.00" fill="#3a2c1e" />
<polygon points="155.23,139.17 158.78,139.17 154.28,196.00 150.73,196.00" fill="#141210" />
<polygon points="160.81,138.86 163.86,138.86 159.36,196.00 156.31,196.00" fill="#1a1612" />
<polygon points="166.02,138.57 170.01,138.57 165.51,196.00 161.52,196.00" fill="#201a14" />
<polygon points="171.65,138.26 176.25,138.26 171.75,196.00 167.15,196.00" fill="#201a14" />
<polygon points="177.16,137.96 181.35,137.96 176.85,196.00 172.66,196.00" fill="#141210" />
<polygon points="183.76,137.60 187.18,137.60 182.68,196.00 179.26,196.00" fill="#2a2018" />
<polygon points="189.57,137.28 192.43,137.28 187.93,196.00 185.07,196.00" fill="#3a2c1e" />
<polygon points="193.93,137.04 198.31,137.04 193.81,196.00 189.43,196.00" fill="#6a4e30" />
<polygon points="198.92,136.76 202.66,136.76 198.16,196.00 194.42,196.00" fill="#201a14" />
<polygon points="205.02,136.43 209.26,136.43 204.76,196.00 200.52,196.00" fill="#141210" />
<polygon points="210.54,136.13 214.45,136.13 209.95,196.00 206.04,196.00" fill="#5a4228" />
<polygon points="215.46,135.85 219.79,135.85 215.29,196.00 210.96,196.00" fill="#6a4e30" />
<polygon points="221.98,135.50 224.83,135.50 220.33,196.00 217.48,196.00" fill="#6a4e30" />
<polygon points="225.92,135.28 230.48,135.28 225.98,196.00 221.42,196.00" fill="#3a2c1e" />
<polygon points="233.03,134.89 237.59,134.89 233.09,196.00 228.53,196.00" fill="#201a14" />
<polygon points="240.05,134.50 244.47,134.50 239.97,196.00 235.55,196.00" fill="#5a4228" />
<polygon points="246.78,134.13 250.39,134.13 245.89,196.00 242.28,196.00" fill="#5a4228" />
<polygon points="251.07,133.90 254.77,133.90 250.27,196.00 246.57,196.00" fill="#5a4228" />
<polygon points="256.90,133.58 261.34,133.58 256.84,196.00 252.40,196.00" fill="#3a2c1e" />
<polygon points="262.38,133.27 265.11,133.27 260.61,196.00 257.88,196.00" fill="#141210" />
<polygon points="267.31,133.00 270.97,133.00 266.47,196.00 262.81,196.00" fill="#1a1612" />
<polygon points="272.95,132.69 276.49,132.69 271.99,196.00 268.45,196.00" fill="#1a1612" />
<polygon points="279.09,132.36 282.72,132.36 278.22,196.00 274.59,196.00" fill="#6a4e30" />
<polygon points="284.68,132.05 289.17,132.05 284.67,196.00 280.18,196.00" fill="#3a2c1e" />
<polygon points="290.76,131.71 293.53,131.71 289.03,196.00 286.26,196.00" fill="#6a4e30" />
<polygon points="294.57,131.50 298.29,131.50 293.79,196.00 290.07,196.00" fill="#201a14" />
<polygon points="300.55,131.17 304.43,131.17 299.93,196.00 296.05,196.00" fill="#201a14" />
<polygon points="126.00,168.00 300.00,160.00 300.00,163.60 126.00,172.00" fill="#94744a" />
</g></g>
<g clip-path="url(#pc1)"><g filter="url(#bl1)">
<rect x="185.00" y="81.00" width="3.20" height="22.00" fill="#3a3430" />
<rect x="179.00" y="100.00" width="9.60" height="14.00" fill="#7c6846" />
<circle cx="183.60" cy="106.40" r="3.40" fill="#c8b684" />
<rect x="180.60" y="113.00" width="6.60" height="83.00" fill="#6a5438" />
<rect x="199.00" y="134.00" width="4.60" height="62.00" fill="#4a3c2e" />
<rect x="229.00" y="128.00" width="5.60" height="68.00" fill="#54463a" />
<rect x="268.00" y="81.00" width="7.60" height="115.00" fill="#4c443c" />
<rect x="285.00" y="81.00" width="9.00" height="115.00" fill="#38322c" />
<rect x="250.00" y="131.00" width="4.40" height="65.00" fill="#40362c" />
<rect x="256.00" y="81.00" width="44.00" height="115.00" fill="#2a2018" opacity="0.3"/>
</g></g>
<rect x="290.00" y="81.90" width="8.00" height="112.80" fill="url(#gblk)" />
<rect x="297.60" y="81.90" width="73.40" height="112.80" fill="#020202" />
<rect x="127.60" y="134.00" width="170.00" height="60.70" fill="url(#gbot)" />
<text x="135.00" y="154.71" font-size="10.6" fill="#fff" stroke="#fff" stroke-width="0.13" textLength="142.80" lengthAdjust="spacingAndGlyphs" >Gun Safety Group Sees Room</text>
<text x="135.00" y="167.71" font-size="10.6" fill="#fff" stroke="#fff" stroke-width="0.13" textLength="126.40" lengthAdjust="spacingAndGlyphs" >to Reinforce Existing Laws</text>
<rect x="135.00" y="174.00" width="5.60" height="5.60" fill="#f4f4f4" />
<text x="136.20" y="178.51" font-size="4.6" fill="#111" stroke="#111" stroke-width="0.06" font-weight="bold" textLength="3.20" lengthAdjust="spacingAndGlyphs" font-family="'Liberation Serif', serif">E</text>
<text x="143.80" y="178.44" font-size="4.4" fill="#d8d8d8" stroke="#d8d8d8" stroke-width="0.06" textLength="39.40" lengthAdjust="spacingAndGlyphs" >The New York Times</text>
<circle cx="189.60" cy="187.4" r="0.85" fill="#8a8a8a"/>
<circle cx="195.88" cy="187.4" r="0.85" fill="#8a8a8a"/>
<circle cx="202.16" cy="187.4" r="1.0" fill="#fff"/>
<circle cx="208.44" cy="187.4" r="0.85" fill="#8a8a8a"/>
<circle cx="214.72" cy="187.4" r="0.85" fill="#8a8a8a"/>
<circle cx="221.00" cy="187.4" r="0.85" fill="#8a8a8a"/>
<circle cx="227.28" cy="187.4" r="0.85" fill="#8a8a8a"/>
<circle cx="233.56" cy="187.4" r="0.85" fill="#8a8a8a"/>
<circle cx="239.84" cy="187.4" r="0.85" fill="#8a8a8a"/>
<circle cx="246.12" cy="187.4" r="0.85" fill="#8a8a8a"/>
<circle cx="252.40" cy="187.4" r="0.85" fill="#8a8a8a"/>
<circle cx="258.68" cy="187.4" r="0.85" fill="#8a8a8a"/>
<circle cx="264.96" cy="187.4" r="0.85" fill="#8a8a8a"/>
<circle cx="271.24" cy="187.4" r="0.85" fill="#8a8a8a"/>
<circle cx="277.52" cy="187.4" r="0.85" fill="#8a8a8a"/>
<circle cx="283.80" cy="187.4" r="0.85" fill="#8a8a8a"/>
<circle cx="290.08" cy="187.4" r="0.85" fill="#8a8a8a"/>
<circle cx="296.36" cy="187.4" r="0.85" fill="#8a8a8a"/>
<circle cx="302.64" cy="187.4" r="0.85" fill="#8a8a8a"/>
<circle cx="308.92" cy="187.4" r="0.85" fill="#8a8a8a"/>
<clipPath id="cph"><rect x="127.6" y="81.9" width="243.4" height="112.8"/></clipPath>
<g clip-path="url(#cph)">
<text x="301.20" y="83.50" font-size="5.7" fill="#fff" stroke="#fff" stroke-width="0.06" font-weight="bold" textLength="62.00" lengthAdjust="spacingAndGlyphs" >of Color, One Community,</text>
</g>
<text x="301.20" y="90.90" font-size="5.7" fill="#fff" stroke="#fff" stroke-width="0.06" font-weight="bold" textLength="51.60" lengthAdjust="spacingAndGlyphs" >Few Are Untouched by</text>
<text x="301.20" y="97.59" font-size="5.7" fill="#fff" stroke="#fff" stroke-width="0.06" font-weight="bold" textLength="35.20" lengthAdjust="spacingAndGlyphs" >College Killings</text>
<rect x="301.20" y="103.20" width="5.60" height="5.60" fill="#f4f4f4" />
<text x="302.40" y="107.71" font-size="4.6" fill="#111" stroke="#111" stroke-width="0.06" font-weight="bold" textLength="3.20" lengthAdjust="spacingAndGlyphs" font-family="'Liberation Serif', serif">E</text>
<text x="309.80" y="107.64" font-size="4.4" fill="#cfcfcf" stroke="#cfcfcf" stroke-width="0.06" textLength="38.80" lengthAdjust="spacingAndGlyphs" >The New York Times</text>
<rect x="301.20" y="114.20" width="61.60" height="0.50" fill="#3a3a3a" />
<text x="301.20" y="124.09" font-size="5.7" fill="#fff" stroke="#fff" stroke-width="0.06" font-weight="bold" textLength="55.40" lengthAdjust="spacingAndGlyphs" >Clinton to push new gun</text>
<text x="301.20" y="130.80" font-size="5.7" fill="#fff" stroke="#fff" stroke-width="0.06" font-weight="bold" textLength="50.40" lengthAdjust="spacingAndGlyphs" >controls after Oregon</text>
<text x="301.20" y="137.50" font-size="5.7" fill="#fff" stroke="#fff" stroke-width="0.06" font-weight="bold" textLength="20.00" lengthAdjust="spacingAndGlyphs" >shooting</text>
<rect x="301.20" y="143.40" width="5.80" height="5.80" fill="#f4f4f4" />
<text x="301.90" y="147.36" font-size="3.6" fill="#111" stroke="#111" stroke-width="0.06" font-weight="bold" textLength="4.40" lengthAdjust="spacingAndGlyphs" >AP</text>
<rect x="301.90" y="148.00" width="4.40" height="0.60" fill="#e02a2a" />
<text x="309.80" y="147.84" font-size="4.4" fill="#cfcfcf" stroke="#cfcfcf" stroke-width="0.06" textLength="31.40" lengthAdjust="spacingAndGlyphs" >Associated Press</text>
<rect x="301.20" y="154.00" width="61.60" height="0.50" fill="#3a3a3a" />
<text x="301.20" y="164.00" font-size="5.7" fill="#fff" stroke="#fff" stroke-width="0.06" font-weight="bold" textLength="59.00" lengthAdjust="spacingAndGlyphs" >Pastor's sermon: 'Violence</text>
<text x="301.20" y="170.59" font-size="5.7" fill="#fff" stroke="#fff" stroke-width="0.06" font-weight="bold" textLength="59.80" lengthAdjust="spacingAndGlyphs" >will not have the last word'</text>
<rect x="301.20" y="176.40" width="5.80" height="5.80" fill="#f4f4f4" />
<text x="301.90" y="180.36" font-size="3.6" fill="#111" stroke="#111" stroke-width="0.06" font-weight="bold" textLength="4.40" lengthAdjust="spacingAndGlyphs" >AP</text>
<rect x="301.90" y="181.00" width="4.40" height="0.60" fill="#e02a2a" />
<text x="309.80" y="180.84" font-size="4.4" fill="#cfcfcf" stroke="#cfcfcf" stroke-width="0.06" textLength="31.40" lengthAdjust="spacingAndGlyphs" >Associated Press</text>
<g clip-path="url(#pc2)">
<rect x="379.20" y="82.10" width="117.20" height="66.60" fill="#b4c0d2" />
<g filter="url(#bl05)">
<rect x="379.00" y="81.00" width="26.00" height="10.00" fill="#a4b2c8" />
<ellipse cx="390.00" cy="95.00" rx="12.00" ry="5.00" fill="#e6eaf0" />
<ellipse cx="484.00" cy="90.00" rx="14.00" ry="7.00" fill="#dfe3ea" />
<ellipse cx="488.00" cy="99.00" rx="10.00" ry="4.00" fill="#eceff2" />
<rect x="379.00" y="99.00" width="26.00" height="18.00" fill="#3c3c48" />
<ellipse cx="386.00" cy="100.00" rx="6.00" ry="2.60" fill="#4a4c52" />
<rect x="379.00" y="92.00" width="2.00" height="10.00" fill="#2e2e34" />
<rect x="470.00" y="99.00" width="28.00" height="18.00" fill="#3a4048" />
<ellipse cx="484.00" cy="100.00" rx="9.00" ry="3.00" fill="#464c50" />
<rect x="492.60" y="84.00" width="3.20" height="30.00" fill="#2a3a3c" />
<rect x="487.00" y="88.00" width="1.20" height="22.00" fill="#34383a" />
<rect x="394.80" y="100.00" width="3.80" height="12.00" fill="#b890b4" />
<rect x="472.60" y="100.00" width="4.00" height="14.00" fill="#b890b4" />
<rect x="384.00" y="102.00" width="2.60" height="9.00" fill="#9a7aa0" />
<rect x="404.00" y="100.00" width="66.00" height="17.00" fill="#b6a696" />
<rect x="404.60" y="92.00" width="7.80" height="24.00" fill="#d2cec6" />
<rect x="414.00" y="88.00" width="11.00" height="28.00" fill="#d6d2ca" />
<rect x="426.00" y="84.00" width="17.60" height="32.00" fill="#c6c2ba" />
<rect x="443.60" y="88.00" width="10.40" height="28.00" fill="#d4d0c8" />
<rect x="454.00" y="88.00" width="7.00" height="28.00" fill="#6e5e54" />
<rect x="461.00" y="92.00" width="7.40" height="24.00" fill="#cabaa4" />
<rect x="469.00" y="90.00" width="5.00" height="26.00" fill="#c8c8c8" />
<rect x="404.60" y="97.00" width="7.80" height="1.40" fill="#8a8a90" />
<rect x="414.00" y="96.00" width="11.00" height="1.40" fill="#8a8a90" />
<rect x="443.60" y="96.00" width="10.40" height="1.40" fill="#8a8a90" />
<polygon points="404.00,93.40 413.00,93.40 408.60,80.00" fill="#2c78b8" />
<rect x="404.60" y="93.00" width="7.80" height="2.00" fill="#3a86c4" />
<rect x="414.00" y="81.00" width="11.00" height="8.60" fill="#2e7aba" />
<rect x="414.60" y="89.60" width="10.00" height="1.60" fill="#4a90c8" />
<polygon points="428.60,88.00 433.00,88.00 430.80,79.00" fill="#2a5a98" />
<polygon points="434.80,88.00 439.20,88.00 437.00,79.00" fill="#2a5a98" />
<rect x="443.60" y="81.00" width="10.40" height="8.60" fill="#2e7aba" />
<polygon points="460.40,93.00 469.00,93.00 464.60,80.00" fill="#2c78b8" />
<polygon points="469.60,91.00 474.00,91.00 471.80,81.00" fill="#d8d8dc" />
<rect x="456.60" y="81.00" width="1.40" height="8.00" fill="#4a4a50" />
<rect x="431.00" y="92.00" width="2.40" height="4.00" fill="#6a6a70" />
<rect x="436.60" y="92.00" width="2.40" height="4.00" fill="#6a6a70" />
<rect x="418.00" y="99.00" width="2.40" height="5.00" fill="#9a968e" />
<rect x="447.60" y="99.00" width="2.40" height="5.00" fill="#9a968e" />
<rect x="429.00" y="104.60" width="10.60" height="8.00" fill="#2c3c7c" />
<ellipse cx="434.30" cy="105.00" rx="5.30" ry="2.60" fill="#2c3c7c" />
<rect x="430.00" y="109.00" width="8.60" height="2.00" fill="#5a78c0" />
<rect x="423.00" y="104.00" width="3.60" height="10.00" fill="#7a5cb0" />
<rect x="441.40" y="104.00" width="3.80" height="10.00" fill="#7a5cb0" />
<rect x="412.00" y="105.00" width="2.60" height="8.00" fill="#8a6ab0" />
<rect x="452.00" y="105.00" width="2.60" height="8.00" fill="#8a6ab0" />
<rect x="379.00" y="114.60" width="118.00" height="35.00" fill="#5c5452" />
<ellipse cx="407.08" cy="133.05" rx="1.52" ry="1.08" fill="#221e1e" />
<ellipse cx="447.54" cy="135.20" rx="0.93" ry="0.89" fill="#3c3852" />
<ellipse cx="496.49" cy="130.46" rx="1.13" ry="1.21" fill="#e4d8d0" />
<ellipse cx="396.77" cy="136.22" rx="1.05" ry="0.71" fill="#e4d8d0" />
<ellipse cx="470.71" cy="119.58" rx="0.74" ry="1.32" fill="#6a5e5e" />
<ellipse cx="476.18" cy="123.43" rx="1.35" ry="1.40" fill="#6a5e5e" />
<ellipse cx="463.27" cy="146.24" rx="1.36" ry="1.16" fill="#b8a098" />
<ellipse cx="492.76" cy="118.70" rx="0.79" ry="0.81" fill="#221e1e" />
<ellipse cx="404.60" cy="147.79" rx="1.40" ry="1.38" fill="#b8a098" />
<ellipse cx="428.70" cy="143.17" rx="1.02" ry="1.17" fill="#6a5e5e" />
<ellipse cx="447.94" cy="145.65" rx="1.52" ry="0.72" fill="#3a3434" />
<ellipse cx="412.00" cy="135.20" rx="0.85" ry="1.39" fill="#c87a70" />
<ellipse cx="492.83" cy="145.66" rx="0.79" ry="1.22" fill="#6a5e5e" />
<ellipse cx="453.69" cy="148.58" rx="0.96" ry="0.75" fill="#9a8a86" />
<ellipse cx="479.77" cy="148.64" rx="1.01" ry="0.75" fill="#f0eae6" />
<ellipse cx="484.86" cy="114.70" rx="1.39" ry="1.40" fill="#b8a098" />
<ellipse cx="384.21" cy="135.51" rx="1.04" ry="1.17" fill="#d8ccc4" />
<ellipse cx="444.00" cy="146.27" rx="1.15" ry="1.50" fill="#9a8a86" />
<ellipse cx="415.54" cy="116.69" rx="1.18" ry="1.46" fill="#6a5e5e" />
<ellipse cx="493.63" cy="124.21" rx="0.84" ry="0.73" fill="#9a8a86" />
<ellipse cx="481.40" cy="124.98" rx="1.51" ry="1.00" fill="#2a2424" />
<ellipse cx="433.33" cy="132.20" rx="1.48" ry="1.24" fill="#3a3434" />
<ellipse cx="391.10" cy="148.05" rx="1.16" ry="1.04" fill="#8a9ab8" />
<ellipse cx="464.00" cy="122.32" rx="1.09" ry="0.91" fill="#9a8a86" />
<ellipse cx="414.75" cy="125.86" rx="1.07" ry="1.16" fill="#8a9ab8" />
<ellipse cx="381.37" cy="135.55" rx="0.82" ry="1.21" fill="#3a3434" />
<ellipse cx="418.23" cy="126.35" rx="1.25" ry="0.92" fill="#221e1e" />
<ellipse cx="436.76" cy="134.63" rx="0.72" ry="1.00" fill="#3a3434" />
<ellipse cx="453.10" cy="124.45" rx="0.99" ry="0.99" fill="#6a5e5e" />
<ellipse cx="415.90" cy="126.92" rx="0.94" ry="1.33" fill="#6a5e5e" />
<ellipse cx="391.37" cy="142.46" rx="1.32" ry="0.81" fill="#6a5e5e" />
<ellipse cx="438.00" cy="136.88" rx="0.91" ry="0.85" fill="#9a8a86" />
<ellipse cx="430.36" cy="138.43" rx="1.24" ry="1.46" fill="#f0eae6" />
<ellipse cx="458.64" cy="121.86" rx="1.47" ry="0.84" fill="#8a9ab8" />
<ellipse cx="418.73" cy="136.76" rx="1.11" ry="0.88" fill="#6a5e5e" />
<ellipse cx="393.27" cy="132.54" rx="0.98" ry="1.37" fill="#7a5a54" />
<ellipse cx="446.83" cy="144.23" rx="1.43" ry="1.21" fill="#221e1e" />
<ellipse cx="474.14" cy="126.08" rx="1.08" ry="1.11" fill="#2a2424" />
<ellipse cx="479.30" cy="130.27" rx="1.08" ry="1.04" fill="#3a3434" />
<ellipse cx="427.32" cy="146.22" rx="0.88" ry="1.08" fill="#2a2424" />
<ellipse cx="477.24" cy="135.79" rx="1.09" ry="1.46" fill="#e4d8d0" />
<ellipse cx="488.43" cy="121.77" rx="1.11" ry="1.30" fill="#c87a70" />
<ellipse cx="467.27" cy="147.72" rx="1.01" ry="0.88" fill="#e4d8d0" />
<ellipse cx="387.03" cy="134.60" rx="0.81" ry="0.90" fill="#9a8a86" />
<ellipse cx="383.15" cy="142.10" rx="1.53" ry="1.42" fill="#e4d8d0" />
<ellipse cx="485.16" cy="134.19" rx="1.13" ry="0.80" fill="#d8ccc4" />
<ellipse cx="438.38" cy="122.37" rx="1.17" ry="1.03" fill="#d8ccc4" />
<ellipse cx="489.81" cy="135.43" rx="0.81" ry="1.48" fill="#221e1e" />
<ellipse cx="442.84" cy="142.40" rx="1.02" ry="0.86" fill="#d8ccc4" />
<ellipse cx="442.09" cy="142.59" rx="0.92" ry="0.92" fill="#2a2424" />
<ellipse cx="483.98" cy="118.50" rx="1.14" ry="1.16" fill="#d8ccc4" />
<ellipse cx="426.23" cy="140.48" rx="0.94" ry="1.12" fill="#7a5a54" />
<ellipse cx="428.91" cy="130.55" rx="1.44" ry="1.39" fill="#8a9ab8" />
<ellipse cx="470.48" cy="115.62" rx="0.76" ry="1.48" fill="#d8ccc4" />
<ellipse cx="479.82" cy="117.01" rx="1.14" ry="0.83" fill="#e4d8d0" />
<ellipse cx="387.47" cy="127.50" rx="1.23" ry="0.99" fill="#b8a098" />
<ellipse cx="401.55" cy="125.51" rx="0.81" ry="0.70" fill="#f0eae6" />
<ellipse cx="464.32" cy="141.84" rx="0.86" ry="1.00" fill="#6a5e5e" />
<ellipse cx="450.32" cy="141.39" rx="1.27" ry="0.73" fill="#b8a098" />
<ellipse cx="483.61" cy="115.86" rx="1.15" ry="1.26" fill="#3a3434" />
<ellipse cx="428.62" cy="138.29" rx="0.72" ry="0.87" fill="#3c3852" />
<ellipse cx="410.87" cy="134.65" rx="1.08" ry="1.04" fill="#8a9ab8" />
<ellipse cx="482.80" cy="146.78" rx="1.57" ry="1.15" fill="#221e1e" />
<ellipse cx="481.70" cy="118.25" rx="0.81" ry="1.35" fill="#c87a70" />
<ellipse cx="457.15" cy="145.06" rx="1.04" ry="0.79" fill="#8a9ab8" />
<ellipse cx="416.57" cy="132.62" rx="1.23" ry="0.70" fill="#8a9ab8" />
<ellipse cx="395.94" cy="141.10" rx="1.17" ry="1.15" fill="#d8ccc4" />
<ellipse cx="456.79" cy="127.15" rx="1.01" ry="1.38" fill="#d8ccc4" />
<ellipse cx="382.01" cy="118.03" rx="1.45" ry="1.46" fill="#3c3852" />
<ellipse cx="447.33" cy="141.96" rx="1.60" ry="1.15" fill="#d8ccc4" />
<ellipse cx="441.42" cy="122.34" rx="1.37" ry="1.45" fill="#e4d8d0" />
<ellipse cx="386.21" cy="125.35" rx="0.86" ry="0.76" fill="#6a5e5e" />
<ellipse cx="496.81" cy="136.61" rx="1.25" ry="1.30" fill="#3c3852" />
<ellipse cx="425.46" cy="126.86" rx="1.54" ry="1.15" fill="#b8a098" />
<ellipse cx="493.03" cy="127.14" rx="1.58" ry="1.03" fill="#7a5a54" />
<ellipse cx="467.19" cy="119.62" rx="1.21" ry="1.16" fill="#c87a70" />
<ellipse cx="488.02" cy="137.99" rx="1.28" ry="1.42" fill="#2a2424" />
<ellipse cx="396.62" cy="117.36" rx="1.14" ry="1.26" fill="#c87a70" />
<ellipse cx="491.18" cy="134.53" rx="0.82" ry="1.30" fill="#2a2424" />
<ellipse cx="396.29" cy="132.05" rx="1.47" ry="1.13" fill="#7a5a54" />
<ellipse cx="470.99" cy="137.50" rx="1.24" ry="1.17" fill="#b8a098" />
<ellipse cx="495.08" cy="145.13" rx="0.72" ry="1.08" fill="#9a8a86" />
<ellipse cx="424.16" cy="120.03" rx="0.91" ry="1.09" fill="#221e1e" />
<ellipse cx="480.93" cy="128.64" rx="1.13" ry="1.18" fill="#c87a70" />
<ellipse cx="434.23" cy="143.21" rx="1.20" ry="1.09" fill="#3a3434" />
<ellipse cx="464.04" cy="143.98" rx="1.40" ry="1.41" fill="#b8a098" />
<ellipse cx="384.41" cy="145.88" rx="1.28" ry="1.32" fill="#7a5a54" />
<ellipse cx="387.17" cy="121.61" rx="0.92" ry="0.85" fill="#9a8a86" />
<ellipse cx="409.52" cy="120.55" rx="1.31" ry="0.73" fill="#c87a70" />
<ellipse cx="489.19" cy="119.94" rx="0.98" ry="1.04" fill="#d8ccc4" />
<ellipse cx="465.02" cy="117.01" rx="0.94" ry="1.43" fill="#f0eae6" />
<ellipse cx="383.26" cy="129.83" rx="1.31" ry="0.71" fill="#c87a70" />
<ellipse cx="418.51" cy="129.27" rx="0.77" ry="1.22" fill="#3c3852" />
<ellipse cx="466.60" cy="131.15" rx="1.19" ry="0.80" fill="#2a2424" />
<ellipse cx="411.42" cy="137.29" rx="1.09" ry="1.12" fill="#f0eae6" />
<ellipse cx="408.61" cy="132.47" rx="1.04" ry="1.32" fill="#c87a70" />
<ellipse cx="468.36" cy="124.34" rx="1.30" ry="1.46" fill="#3a3434" />
<ellipse cx="475.45" cy="117.75" rx="1.31" ry="1.13" fill="#221e1e" />
<ellipse cx="392.37" cy="131.29" rx="0.75" ry="0.94" fill="#221e1e" />
<ellipse cx="464.89" cy="139.98" rx="1.28" ry="1.20" fill="#3a3434" />
<ellipse cx="400.13" cy="145.15" rx="1.11" ry="0.79" fill="#3a3434" />
<ellipse cx="445.05" cy="146.23" rx="1.35" ry="1.18" fill="#3a3434" />
<ellipse cx="444.48" cy="136.66" rx="1.13" ry="1.33" fill="#3c3852" />
<ellipse cx="462.25" cy="117.76" rx="1.38" ry="1.13" fill="#2a2424" />
<ellipse cx="466.28" cy="126.57" rx="0.94" ry="0.74" fill="#9a8a86" />
<ellipse cx="395.11" cy="130.75" rx="0.92" ry="1.32" fill="#9a8a86" />
<ellipse cx="420.78" cy="125.65" rx="1.10" ry="1.35" fill="#b8a098" />
<ellipse cx="387.17" cy="131.43" rx="0.84" ry="1.17" fill="#f0eae6" />
<ellipse cx="459.41" cy="133.75" rx="0.80" ry="1.26" fill="#c87a70" />
<ellipse cx="445.92" cy="137.46" rx="1.43" ry="1.30" fill="#b8a098" />
<ellipse cx="448.85" cy="119.13" rx="1.42" ry="1.14" fill="#b8a098" />
<ellipse cx="399.10" cy="120.26" rx="1.03" ry="0.93" fill="#9a8a86" />
<ellipse cx="478.39" cy="129.57" rx="1.55" ry="1.01" fill="#b8a098" />
<ellipse cx="444.21" cy="134.41" rx="1.15" ry="1.12" fill="#3a3434" />
<ellipse cx="462.42" cy="145.35" rx="1.14" ry="1.18" fill="#3a3434" />
<ellipse cx="464.77" cy="114.08" rx="1.38" ry="0.89" fill="#8a9ab8" />
<ellipse cx="399.43" cy="135.88" rx="0.87" ry="1.12" fill="#7a5a54" />
<ellipse cx="383.37" cy="131.52" rx="1.55" ry="0.79" fill="#3a3434" />
<ellipse cx="412.42" cy="137.01" rx="0.82" ry="1.33" fill="#2a2424" />
<ellipse cx="452.55" cy="115.77" rx="1.26" ry="1.10" fill="#221e1e" />
<ellipse cx="437.83" cy="114.66" rx="0.99" ry="1.40" fill="#221e1e" />
<ellipse cx="460.97" cy="118.70" rx="1.40" ry="0.73" fill="#6a5e5e" />
<ellipse cx="388.44" cy="148.79" rx="0.88" ry="0.75" fill="#8a9ab8" />
<ellipse cx="402.60" cy="138.47" rx="1.14" ry="0.79" fill="#7a5a54" />
<ellipse cx="384.04" cy="116.73" rx="1.34" ry="1.01" fill="#7a5a54" />
<ellipse cx="434.85" cy="116.38" rx="0.89" ry="1.09" fill="#b8a098" />
<ellipse cx="381.76" cy="130.02" rx="1.06" ry="0.84" fill="#c87a70" />
<ellipse cx="485.13" cy="139.19" rx="1.46" ry="1.06" fill="#221e1e" />
<ellipse cx="421.66" cy="128.06" rx="1.42" ry="0.91" fill="#d8ccc4" />
<ellipse cx="422.62" cy="143.94" rx="0.88" ry="0.87" fill="#e4d8d0" />
<ellipse cx="399.15" cy="128.13" rx="1.27" ry="0.81" fill="#2a2424" />
<ellipse cx="450.82" cy="129.50" rx="0.75" ry="0.72" fill="#2a2424" />
<ellipse cx="431.87" cy="128.27" rx="1.34" ry="0.89" fill="#c87a70" />
<ellipse cx="383.62" cy="131.26" rx="0.92" ry="1.01" fill="#7a5a54" />
<ellipse cx="401.50" cy="125.65" rx="1.01" ry="0.80" fill="#f0eae6" />
<ellipse cx="385.12" cy="139.47" rx="1.58" ry="1.45" fill="#9a8a86" />
<ellipse cx="472.13" cy="147.66" rx="0.92" ry="0.91" fill="#3c3852" />
<ellipse cx="475.13" cy="136.02" rx="0.99" ry="0.75" fill="#221e1e" />
<ellipse cx="430.38" cy="117.13" rx="0.70" ry="0.72" fill="#6a5e5e" />
<ellipse cx="389.68" cy="119.96" rx="1.13" ry="0.85" fill="#d8ccc4" />
<ellipse cx="439.15" cy="125.59" rx="1.13" ry="1.34" fill="#8a9ab8" />
<ellipse cx="487.25" cy="146.90" rx="1.04" ry="1.30" fill="#d8ccc4" />
<ellipse cx="453.52" cy="127.80" rx="0.87" ry="1.03" fill="#9a8a86" />
<ellipse cx="438.88" cy="133.15" rx="1.31" ry="1.44" fill="#e4d8d0" />
<ellipse cx="399.61" cy="139.89" rx="1.05" ry="1.45" fill="#c87a70" />
<ellipse cx="421.39" cy="120.44" rx="1.07" ry="0.88" fill="#8a9ab8" />
<ellipse cx="470.98" cy="130.82" rx="1.44" ry="1.11" fill="#9a8a86" />
<ellipse cx="467.82" cy="146.03" rx="1.05" ry="1.09" fill="#c87a70" />
<ellipse cx="397.16" cy="138.87" rx="1.44" ry="0.77" fill="#d8ccc4" />
<ellipse cx="460.64" cy="137.12" rx="0.91" ry="1.37" fill="#221e1e" />
<ellipse cx="454.80" cy="144.75" rx="1.10" ry="1.42" fill="#d8ccc4" />
<ellipse cx="465.48" cy="125.68" rx="0.70" ry="0.86" fill="#221e1e" />
<ellipse cx="471.85" cy="146.05" rx="1.21" ry="0.79" fill="#221e1e" />
<ellipse cx="388.54" cy="136.72" rx="1.32" ry="1.48" fill="#7a5a54" />
<ellipse cx="489.38" cy="119.01" rx="0.80" ry="0.93" fill="#d8ccc4" />
<ellipse cx="403.63" cy="143.78" rx="1.08" ry="1.32" fill="#e4d8d0" />
<ellipse cx="450.31" cy="141.60" rx="1.40" ry="1.07" fill="#e4d8d0" />
<ellipse cx="452.44" cy="115.45" rx="0.80" ry="0.72" fill="#8a9ab8" />
<ellipse cx="493.04" cy="120.97" rx="0.78" ry="1.07" fill="#9a8a86" />
<ellipse cx="405.28" cy="143.03" rx="0.80" ry="1.09" fill="#6a5e5e" />
<ellipse cx="457.88" cy="138.48" rx="1.24" ry="1.06" fill="#b8a098" />
<ellipse cx="392.09" cy="143.24" rx="1.10" ry="1.00" fill="#6a5e5e" />
<ellipse cx="392.80" cy="114.26" rx="1.36" ry="0.76" fill="#9a8a86" />
<ellipse cx="419.85" cy="130.96" rx="1.53" ry="1.25" fill="#f0eae6" />
<ellipse cx="422.03" cy="141.44" rx="1.25" ry="0.87" fill="#f0eae6" />
<ellipse cx="420.36" cy="148.85" rx="0.91" ry="1.05" fill="#221e1e" />
<ellipse cx="408.61" cy="125.31" rx="1.54" ry="1.28" fill="#c87a70" />
<ellipse cx="482.22" cy="148.53" rx="1.12" ry="1.27" fill="#6a5e5e" />
<ellipse cx="479.60" cy="126.87" rx="1.51" ry="1.46" fill="#7a5a54" />
<ellipse cx="436.13" cy="141.07" rx="1.12" ry="1.17" fill="#b8a098" />
<ellipse cx="383.13" cy="147.51" rx="0.87" ry="0.78" fill="#d8ccc4" />
<ellipse cx="464.24" cy="124.30" rx="0.76" ry="1.08" fill="#e4d8d0" />
<ellipse cx="401.99" cy="121.26" rx="1.09" ry="0.98" fill="#3c3852" />
<ellipse cx="466.57" cy="140.14" rx="0.83" ry="1.06" fill="#9a8a86" />
<ellipse cx="486.20" cy="129.53" rx="0.84" ry="1.31" fill="#7a5a54" />
<ellipse cx="461.65" cy="148.17" rx="1.49" ry="1.00" fill="#8a9ab8" />
<ellipse cx="398.04" cy="124.92" rx="1.13" ry="1.50" fill="#3c3852" />
<ellipse cx="405.27" cy="147.48" rx="0.96" ry="1.07" fill="#9a8a86" />
<ellipse cx="483.64" cy="142.25" rx="1.37" ry="1.44" fill="#9a8a86" />
<ellipse cx="440.31" cy="114.50" rx="1.18" ry="1.13" fill="#3a3434" />
<ellipse cx="398.56" cy="115.76" rx="1.59" ry="1.33" fill="#7a5a54" />
<ellipse cx="420.88" cy="147.80" rx="1.58" ry="0.73" fill="#221e1e" />
<ellipse cx="400.83" cy="114.46" rx="1.51" ry="1.37" fill="#b8a098" />
<ellipse cx="450.21" cy="142.39" rx="0.98" ry="0.90" fill="#3c3852" />
<ellipse cx="473.65" cy="128.64" rx="1.01" ry="0.72" fill="#9a8a86" />
<ellipse cx="383.40" cy="148.86" rx="1.52" ry="1.35" fill="#2a2424" />
<ellipse cx="408.19" cy="118.75" rx="1.46" ry="1.03" fill="#8a9ab8" />
<ellipse cx="467.57" cy="125.81" rx="0.95" ry="0.83" fill="#2a2424" />
<ellipse cx="381.01" cy="136.51" rx="1.12" ry="1.23" fill="#3c3852" />
<ellipse cx="488.58" cy="142.49" rx="1.16" ry="1.00" fill="#6a5e5e" />
<ellipse cx="453.59" cy="124.28" rx="1.32" ry="1.49" fill="#f0eae6" />
<ellipse cx="443.55" cy="128.29" rx="1.10" ry="0.92" fill="#221e1e" />
<ellipse cx="409.16" cy="123.91" rx="0.84" ry="0.95" fill="#e4d8d0" />
<ellipse cx="440.60" cy="128.42" rx="1.44" ry="1.45" fill="#7a5a54" />
<ellipse cx="451.27" cy="115.07" rx="1.24" ry="0.79" fill="#6a5e5e" />
<ellipse cx="393.78" cy="141.49" rx="1.52" ry="0.78" fill="#8a9ab8" />
<ellipse cx="457.91" cy="127.00" rx="1.14" ry="1.30" fill="#e4d8d0" />
<ellipse cx="476.54" cy="129.67" rx="1.53" ry="0.84" fill="#9a8a86" />
<ellipse cx="424.23" cy="142.99" rx="0.74" ry="0.87" fill="#221e1e" />
<ellipse cx="383.47" cy="125.09" rx="1.05" ry="0.93" fill="#6a5e5e" />
<ellipse cx="394.52" cy="122.76" rx="1.15" ry="1.47" fill="#f0eae6" />
<ellipse cx="466.02" cy="138.44" rx="1.37" ry="1.37" fill="#f0eae6" />
<ellipse cx="453.47" cy="142.62" rx="1.55" ry="1.48" fill="#d8ccc4" />
<ellipse cx="460.66" cy="129.09" rx="1.12" ry="0.93" fill="#3c3852" />
<ellipse cx="445.03" cy="120.11" rx="1.56" ry="0.82" fill="#3c3852" />
<ellipse cx="485.85" cy="120.23" rx="1.31" ry="1.22" fill="#3c3852" />
<ellipse cx="395.78" cy="115.91" rx="1.26" ry="0.95" fill="#8a9ab8" />
<ellipse cx="455.54" cy="118.58" rx="0.74" ry="1.47" fill="#2a2424" />
<ellipse cx="442.10" cy="127.38" rx="1.09" ry="0.85" fill="#f0eae6" />
<ellipse cx="382.10" cy="117.66" rx="0.83" ry="0.80" fill="#f0eae6" />
<ellipse cx="420.59" cy="146.02" rx="1.54" ry="0.71" fill="#f0eae6" />
<ellipse cx="422.77" cy="118.99" rx="0.92" ry="0.98" fill="#3c3852" />
<ellipse cx="491.20" cy="130.98" rx="1.46" ry="1.08" fill="#c87a70" />
<ellipse cx="466.25" cy="132.58" rx="1.10" ry="1.03" fill="#8a9ab8" />
<ellipse cx="442.48" cy="124.69" rx="1.18" ry="1.37" fill="#2a2424" />
<ellipse cx="402.65" cy="134.80" rx="1.46" ry="0.84" fill="#c87a70" />
<ellipse cx="492.69" cy="143.40" rx="0.99" ry="1.37" fill="#2a2424" />
<ellipse cx="394.39" cy="135.13" rx="1.07" ry="1.40" fill="#d8ccc4" />
<ellipse cx="392.52" cy="114.49" rx="1.41" ry="1.49" fill="#f0eae6" />
<ellipse cx="459.89" cy="132.38" rx="0.95" ry="1.07" fill="#8a9ab8" />
<ellipse cx="447.55" cy="125.40" rx="1.24" ry="0.96" fill="#6a5e5e" />
<ellipse cx="438.75" cy="127.07" rx="1.23" ry="1.26" fill="#221e1e" />
<ellipse cx="469.98" cy="139.31" rx="1.48" ry="1.37" fill="#221e1e" />
<ellipse cx="412.84" cy="148.19" rx="0.86" ry="1.18" fill="#9a8a86" />
<ellipse cx="405.11" cy="148.84" rx="1.28" ry="0.93" fill="#c87a70" />
<ellipse cx="493.10" cy="129.85" rx="1.00" ry="1.33" fill="#3c3852" />
<ellipse cx="399.75" cy="135.71" rx="1.10" ry="1.19" fill="#e4d8d0" />
<ellipse cx="387.17" cy="128.89" rx="1.40" ry="0.75" fill="#6a5e5e" />
<ellipse cx="479.83" cy="127.44" rx="1.03" ry="0.87" fill="#f0eae6" />
<ellipse cx="443.75" cy="144.93" rx="1.36" ry="1.01" fill="#b8a098" />
<ellipse cx="445.13" cy="114.42" rx="1.15" ry="1.02" fill="#221e1e" />
<ellipse cx="422.96" cy="136.81" rx="1.23" ry="0.82" fill="#f0eae6" />
<ellipse cx="404.95" cy="126.98" rx="0.70" ry="1.41" fill="#6a5e5e" />
<ellipse cx="403.68" cy="129.23" rx="0.73" ry="1.13" fill="#7a5a54" />
<ellipse cx="487.72" cy="132.70" rx="1.03" ry="1.28" fill="#c87a70" />
<ellipse cx="473.52" cy="121.46" rx="1.31" ry="0.80" fill="#221e1e" />
<ellipse cx="482.84" cy="127.24" rx="0.83" ry="0.95" fill="#3c3852" />
<ellipse cx="444.22" cy="118.11" rx="1.24" ry="0.77" fill="#2a2424" />
<ellipse cx="382.31" cy="126.29" rx="1.14" ry="1.49" fill="#d8ccc4" />
<ellipse cx="434.77" cy="118.90" rx="1.16" ry="1.05" fill="#7a5a54" />
<ellipse cx="453.18" cy="137.09" rx="0.96" ry="1.21" fill="#b8a098" />
<ellipse cx="466.99" cy="144.72" rx="1.10" ry="1.30" fill="#f0eae6" />
<ellipse cx="496.03" cy="116.31" rx="0.99" ry="1.43" fill="#d8ccc4" />
<ellipse cx="453.50" cy="117.30" rx="1.00" ry="1.04" fill="#3a3434" />
<ellipse cx="447.78" cy="144.95" rx="1.28" ry="1.47" fill="#7a5a54" />
<ellipse cx="385.12" cy="132.13" rx="1.17" ry="1.16" fill="#e4d8d0" />
<ellipse cx="389.06" cy="122.13" rx="1.44" ry="1.43" fill="#3c3852" />
<ellipse cx="425.73" cy="126.04" rx="1.30" ry="1.12" fill="#3c3852" />
<ellipse cx="402.88" cy="124.45" rx="0.82" ry="1.13" fill="#6a5e5e" />
<ellipse cx="452.16" cy="126.42" rx="1.47" ry="1.17" fill="#8a9ab8" />
<ellipse cx="464.25" cy="132.40" rx="0.75" ry="1.05" fill="#3c3852" />
<ellipse cx="415.83" cy="120.79" rx="0.87" ry="0.78" fill="#7a5a54" />
<ellipse cx="432.90" cy="146.49" rx="1.06" ry="0.87" fill="#e4d8d0" />
<ellipse cx="401.00" cy="115.32" rx="0.92" ry="1.40" fill="#3c3852" />
<ellipse cx="459.34" cy="139.52" rx="1.06" ry="1.01" fill="#7a5a54" />
<ellipse cx="399.96" cy="122.77" rx="0.75" ry="1.47" fill="#9a8a86" />
<ellipse cx="465.40" cy="121.27" rx="1.10" ry="1.15" fill="#9a8a86" />
<ellipse cx="407.97" cy="138.49" rx="1.43" ry="0.99" fill="#7a5a54" />
<ellipse cx="406.41" cy="137.94" rx="1.05" ry="1.13" fill="#e4d8d0" />
<ellipse cx="449.54" cy="135.98" rx="1.04" ry="0.76" fill="#3c3852" />
<ellipse cx="442.29" cy="130.00" rx="1.22" ry="0.91" fill="#d8ccc4" />
<ellipse cx="485.04" cy="138.00" rx="1.05" ry="1.10" fill="#7a5a54" />
<ellipse cx="436.27" cy="128.22" rx="1.13" ry="0.84" fill="#6a5e5e" />
<ellipse cx="463.59" cy="125.86" rx="0.83" ry="0.96" fill="#c87a70" />
<ellipse cx="420.18" cy="119.13" rx="1.13" ry="1.13" fill="#9a8a86" />
<ellipse cx="480.85" cy="129.63" rx="0.74" ry="0.98" fill="#3c3852" />
<ellipse cx="453.89" cy="135.82" rx="1.39" ry="1.14" fill="#c87a70" />
<ellipse cx="414.72" cy="145.23" rx="1.19" ry="1.49" fill="#9a8a86" />
<ellipse cx="477.64" cy="140.18" rx="1.53" ry="1.04" fill="#9a8a86" />
<ellipse cx="444.92" cy="140.74" rx="1.13" ry="1.15" fill="#b8a098" />
<ellipse cx="408.48" cy="138.42" rx="1.45" ry="1.27" fill="#6a5e5e" />
<ellipse cx="417.24" cy="119.67" rx="1.14" ry="1.13" fill="#c87a70" />
<ellipse cx="433.92" cy="145.78" rx="1.22" ry="0.79" fill="#e4d8d0" />
<ellipse cx="385.47" cy="130.88" rx="0.85" ry="1.23" fill="#7a5a54" />
<ellipse cx="393.06" cy="133.32" rx="1.53" ry="1.39" fill="#f0eae6" />
<ellipse cx="439.83" cy="127.91" rx="1.13" ry="1.25" fill="#f0eae6" />
<ellipse cx="406.19" cy="123.13" rx="1.55" ry="1.08" fill="#7a5a54" />
<ellipse cx="430.22" cy="123.18" rx="0.87" ry="1.16" fill="#3a3434" />
<ellipse cx="439.27" cy="120.98" rx="0.92" ry="0.91" fill="#7a5a54" />
<ellipse cx="420.02" cy="126.01" rx="0.79" ry="1.26" fill="#f0eae6" />
<ellipse cx="467.56" cy="121.89" rx="1.00" ry="0.79" fill="#3c3852" />
<ellipse cx="476.76" cy="118.97" rx="1.30" ry="0.92" fill="#d8ccc4" />
<ellipse cx="439.04" cy="127.03" rx="1.37" ry="1.10" fill="#3c3852" />
<ellipse cx="460.09" cy="128.97" rx="1.09" ry="0.94" fill="#8a9ab8" />
<ellipse cx="411.13" cy="145.54" rx="0.74" ry="0.84" fill="#2a2424" />
<ellipse cx="454.58" cy="121.40" rx="0.82" ry="1.28" fill="#8a9ab8" />
<ellipse cx="403.48" cy="138.44" rx="1.04" ry="0.73" fill="#3a3434" />
<ellipse cx="444.68" cy="140.10" rx="0.88" ry="0.83" fill="#221e1e" />
<ellipse cx="494.70" cy="139.88" rx="1.08" ry="0.93" fill="#3c3852" />
<ellipse cx="392.77" cy="125.79" rx="1.36" ry="0.91" fill="#6a5e5e" />
<ellipse cx="389.24" cy="116.80" rx="0.82" ry="0.71" fill="#3a3434" />
<ellipse cx="388.77" cy="141.48" rx="1.34" ry="1.14" fill="#b8a098" />
<ellipse cx="457.26" cy="129.49" rx="1.33" ry="0.70" fill="#2a2424" />
<ellipse cx="412.22" cy="138.45" rx="0.71" ry="0.97" fill="#2a2424" />
<ellipse cx="464.71" cy="143.20" rx="0.79" ry="1.34" fill="#221e1e" />
<ellipse cx="424.84" cy="142.19" rx="1.54" ry="1.28" fill="#3c3852" />
<ellipse cx="453.02" cy="129.44" rx="1.42" ry="0.98" fill="#7a5a54" />
<ellipse cx="406.13" cy="128.56" rx="1.06" ry="1.48" fill="#f0eae6" />
<ellipse cx="392.53" cy="137.33" rx="0.96" ry="0.72" fill="#7a5a54" />
<ellipse cx="382.13" cy="125.87" rx="1.11" ry="1.11" fill="#7a5a54" />
<ellipse cx="454.53" cy="148.51" rx="1.30" ry="1.29" fill="#b8a098" />
<ellipse cx="440.55" cy="128.93" rx="1.42" ry="0.84" fill="#9a8a86" />
<ellipse cx="432.34" cy="132.57" rx="1.53" ry="1.17" fill="#9a8a86" />
<ellipse cx="452.58" cy="129.35" rx="0.98" ry="1.12" fill="#2a2424" />
<ellipse cx="405.66" cy="132.41" rx="0.81" ry="1.10" fill="#9a8a86" />
<ellipse cx="435.60" cy="122.67" rx="1.07" ry="0.71" fill="#8a9ab8" />
<ellipse cx="434.88" cy="114.16" rx="1.16" ry="1.08" fill="#c87a70" />
<ellipse cx="380.58" cy="126.06" rx="0.97" ry="1.08" fill="#9a8a86" />
<ellipse cx="414.45" cy="124.68" rx="0.98" ry="1.15" fill="#2a2424" />
<ellipse cx="426.88" cy="136.74" rx="1.57" ry="0.85" fill="#f0eae6" />
<ellipse cx="388.85" cy="140.07" rx="1.37" ry="1.28" fill="#e4d8d0" />
<ellipse cx="395.39" cy="119.76" rx="0.97" ry="1.38" fill="#3a3434" />
<ellipse cx="439.30" cy="131.36" rx="1.31" ry="1.44" fill="#221e1e" />
<ellipse cx="428.76" cy="138.88" rx="1.40" ry="1.05" fill="#e4d8d0" />
<ellipse cx="419.52" cy="146.83" rx="0.98" ry="1.29" fill="#221e1e" />
<ellipse cx="409.46" cy="130.56" rx="0.89" ry="0.78" fill="#9a8a86" />
<ellipse cx="409.89" cy="130.76" rx="1.13" ry="0.86" fill="#b8a098" />
<ellipse cx="418.76" cy="116.05" rx="1.60" ry="0.74" fill="#7a5a54" />
<ellipse cx="426.45" cy="127.49" rx="0.79" ry="0.84" fill="#221e1e" />
<ellipse cx="438.17" cy="122.93" rx="1.21" ry="0.97" fill="#b8a098" />
<ellipse cx="429.87" cy="115.40" rx="1.43" ry="1.02" fill="#c87a70" />
<ellipse cx="485.69" cy="127.70" rx="0.90" ry="0.88" fill="#e4d8d0" />
<ellipse cx="402.21" cy="135.21" rx="1.07" ry="1.38" fill="#3a3434" />
<ellipse cx="450.32" cy="128.04" rx="1.04" ry="1.10" fill="#3c3852" />
<ellipse cx="430.07" cy="121.00" rx="0.75" ry="1.15" fill="#b8a098" />
<ellipse cx="398.06" cy="114.77" rx="1.50" ry="1.34" fill="#6a5e5e" />
<ellipse cx="463.13" cy="148.28" rx="1.06" ry="1.11" fill="#2a2424" />
<ellipse cx="392.67" cy="117.65" rx="1.55" ry="0.93" fill="#7a5a54" />
<ellipse cx="479.92" cy="145.72" rx="1.59" ry="0.83" fill="#b8a098" />
<ellipse cx="460.48" cy="135.93" rx="0.98" ry="1.05" fill="#3c3852" />
<ellipse cx="488.53" cy="122.89" rx="1.23" ry="0.97" fill="#d8ccc4" />
<ellipse cx="444.18" cy="121.50" rx="0.95" ry="0.77" fill="#f0eae6" />
<ellipse cx="483.75" cy="122.54" rx="1.48" ry="0.97" fill="#7a5a54" />
<ellipse cx="466.21" cy="117.22" rx="0.97" ry="0.87" fill="#e4d8d0" />
<ellipse cx="442.99" cy="133.60" rx="0.70" ry="1.22" fill="#b8a098" />
<ellipse cx="475.30" cy="122.40" rx="1.38" ry="1.36" fill="#2a2424" />
<ellipse cx="387.35" cy="122.76" rx="0.96" ry="0.98" fill="#7a5a54" />
<ellipse cx="404.52" cy="121.00" rx="1.20" ry="0.79" fill="#3a3434" />
<ellipse cx="429.39" cy="115.97" rx="0.94" ry="0.93" fill="#b8a098" />
<ellipse cx="490.60" cy="121.02" rx="0.98" ry="1.23" fill="#7a5a54" />
<ellipse cx="391.59" cy="145.44" rx="1.34" ry="1.34" fill="#b8a098" />
<ellipse cx="470.88" cy="122.33" rx="0.81" ry="1.16" fill="#c87a70" />
<ellipse cx="381.91" cy="144.50" rx="1.24" ry="0.88" fill="#221e1e" />
<ellipse cx="384.61" cy="141.27" rx="1.19" ry="1.03" fill="#6a5e5e" />
<ellipse cx="418.44" cy="124.18" rx="1.10" ry="1.27" fill="#3c3852" />
<ellipse cx="496.79" cy="119.89" rx="0.81" ry="0.84" fill="#d8ccc4" />
<ellipse cx="479.02" cy="130.78" rx="1.46" ry="0.86" fill="#b8a098" />
<ellipse cx="433.38" cy="130.56" rx="1.03" ry="0.71" fill="#c87a70" />
<ellipse cx="443.29" cy="130.77" rx="1.18" ry="0.71" fill="#3c3852" />
<ellipse cx="387.75" cy="124.67" rx="1.58" ry="0.79" fill="#7a5a54" />
<ellipse cx="481.23" cy="120.13" rx="1.57" ry="0.95" fill="#8a9ab8" />
<ellipse cx="421.80" cy="114.15" rx="1.46" ry="1.40" fill="#7a5a54" />
<ellipse cx="494.61" cy="115.86" rx="0.85" ry="1.21" fill="#b8a098" />
<ellipse cx="438.24" cy="126.20" rx="1.42" ry="1.50" fill="#3c3852" />
<ellipse cx="458.87" cy="144.63" rx="1.37" ry="0.79" fill="#e4d8d0" />
<ellipse cx="469.08" cy="137.30" rx="1.45" ry="0.92" fill="#7a5a54" />
<ellipse cx="457.16" cy="115.00" rx="0.74" ry="1.05" fill="#7a5a54" />
<ellipse cx="393.55" cy="145.12" rx="0.89" ry="1.26" fill="#c87a70" />
<ellipse cx="466.77" cy="135.70" rx="0.99" ry="1.46" fill="#8a9ab8" />
<ellipse cx="480.47" cy="138.57" rx="1.57" ry="0.87" fill="#3a3434" />
<ellipse cx="448.25" cy="118.49" rx="1.10" ry="1.12" fill="#221e1e" />
<ellipse cx="457.98" cy="118.78" rx="1.52" ry="0.94" fill="#c87a70" />
<ellipse cx="453.26" cy="116.73" rx="0.85" ry="1.42" fill="#8a9ab8" />
<ellipse cx="430.69" cy="127.64" rx="1.52" ry="1.13" fill="#e4d8d0" />
<ellipse cx="413.43" cy="126.07" rx="1.40" ry="0.94" fill="#8a9ab8" />
<ellipse cx="387.69" cy="146.48" rx="0.97" ry="1.06" fill="#c87a70" />
<ellipse cx="492.94" cy="131.86" rx="1.53" ry="1.20" fill="#7a5a54" />
<ellipse cx="379.89" cy="139.70" rx="1.55" ry="1.22" fill="#3c3852" />
<ellipse cx="433.07" cy="137.11" rx="0.93" ry="1.41" fill="#6a5e5e" />
<ellipse cx="442.12" cy="140.05" rx="1.45" ry="0.85" fill="#8a9ab8" />
<ellipse cx="471.68" cy="124.44" rx="0.77" ry="1.09" fill="#c87a70" />
<ellipse cx="431.27" cy="138.90" rx="1.47" ry="1.27" fill="#7a5a54" />
<ellipse cx="492.23" cy="145.75" rx="0.70" ry="0.84" fill="#9a8a86" />
<ellipse cx="402.56" cy="147.50" rx="1.31" ry="0.79" fill="#3c3852" />
<ellipse cx="422.39" cy="120.72" rx="1.30" ry="0.70" fill="#e4d8d0" />
<ellipse cx="430.86" cy="131.11" rx="1.52" ry="1.21" fill="#d8ccc4" />
<ellipse cx="471.39" cy="120.25" rx="1.23" ry="1.10" fill="#3c3852" />
<ellipse cx="480.40" cy="132.16" rx="0.92" ry="0.86" fill="#221e1e" />
<ellipse cx="383.16" cy="144.79" rx="1.01" ry="0.71" fill="#f0eae6" />
<ellipse cx="383.46" cy="119.53" rx="0.85" ry="0.99" fill="#f0eae6" />
<ellipse cx="476.25" cy="130.68" rx="1.27" ry="0.75" fill="#e4d8d0" />
<ellipse cx="467.65" cy="122.01" rx="0.83" ry="0.93" fill="#221e1e" />
<ellipse cx="408.40" cy="144.18" rx="1.22" ry="0.82" fill="#221e1e" />
<ellipse cx="429.58" cy="138.57" rx="1.12" ry="1.02" fill="#d8ccc4" />
<ellipse cx="381.63" cy="136.64" rx="1.26" ry="1.48" fill="#8a9ab8" />
<ellipse cx="410.50" cy="124.69" rx="0.71" ry="1.47" fill="#f0eae6" />
<ellipse cx="473.15" cy="128.25" rx="1.06" ry="1.40" fill="#d8ccc4" />
<ellipse cx="468.64" cy="138.04" rx="0.74" ry="0.91" fill="#b8a098" />
<ellipse cx="422.49" cy="129.03" rx="1.01" ry="1.03" fill="#3a3434" />
<ellipse cx="381.42" cy="122.19" rx="1.02" ry="1.11" fill="#6a5e5e" />
<ellipse cx="467.33" cy="142.52" rx="1.32" ry="0.93" fill="#221e1e" />
<ellipse cx="397.77" cy="126.72" rx="0.70" ry="1.22" fill="#c87a70" />
<ellipse cx="436.30" cy="120.83" rx="1.49" ry="1.48" fill="#6a5e5e" />
<ellipse cx="468.59" cy="132.52" rx="1.50" ry="0.83" fill="#3c3852" />
<ellipse cx="476.63" cy="143.17" rx="1.38" ry="1.01" fill="#b8a098" />
<ellipse cx="403.35" cy="136.85" rx="1.49" ry="1.23" fill="#7a5a54" />
<ellipse cx="421.72" cy="141.73" rx="0.97" ry="1.42" fill="#9a8a86" />
<ellipse cx="457.18" cy="127.24" rx="1.40" ry="0.82" fill="#e4d8d0" />
<ellipse cx="419.60" cy="116.64" rx="1.50" ry="1.31" fill="#221e1e" />
<ellipse cx="411.83" cy="120.80" rx="1.32" ry="1.02" fill="#c87a70" />
<ellipse cx="475.77" cy="136.81" rx="1.17" ry="1.00" fill="#7a5a54" />
<ellipse cx="448.50" cy="129.71" rx="1.51" ry="0.79" fill="#3a3434" />
<ellipse cx="466.95" cy="131.97" rx="1.29" ry="1.16" fill="#d8ccc4" />
<ellipse cx="479.65" cy="115.10" rx="1.45" ry="1.14" fill="#8a9ab8" />
<ellipse cx="489.71" cy="124.91" rx="0.81" ry="1.12" fill="#221e1e" />
<ellipse cx="409.42" cy="146.61" rx="1.59" ry="1.32" fill="#8a9ab8" />
<ellipse cx="458.37" cy="123.14" rx="0.85" ry="1.39" fill="#7a5a54" />
<ellipse cx="469.16" cy="140.60" rx="0.87" ry="0.98" fill="#f0eae6" />
<ellipse cx="495.60" cy="137.53" rx="1.20" ry="1.05" fill="#d8ccc4" />
<ellipse cx="392.68" cy="127.70" rx="1.43" ry="0.98" fill="#b8a098" />
<ellipse cx="484.85" cy="128.03" rx="1.12" ry="0.86" fill="#f0eae6" />
<ellipse cx="459.44" cy="129.32" rx="0.80" ry="1.14" fill="#c87a70" />
<ellipse cx="480.37" cy="134.65" rx="0.95" ry="1.21" fill="#221e1e" />
<ellipse cx="408.24" cy="137.78" rx="1.48" ry="0.74" fill="#221e1e" />
<ellipse cx="387.89" cy="134.08" rx="0.88" ry="0.88" fill="#2a2424" />
<ellipse cx="472.56" cy="121.02" rx="1.18" ry="0.77" fill="#2a2424" />
<ellipse cx="425.58" cy="131.62" rx="1.51" ry="1.36" fill="#d8ccc4" />
<ellipse cx="403.45" cy="141.50" rx="1.40" ry="0.79" fill="#b8a098" />
<ellipse cx="389.41" cy="116.37" rx="0.97" ry="1.37" fill="#c87a70" />
<ellipse cx="402.25" cy="129.57" rx="1.32" ry="0.76" fill="#f0eae6" />
</g></g>
<rect x="379.20" y="108.10" width="117.20" height="40.60" fill="url(#gdis)" />
<text x="385.20" y="121.20" font-size="7.8" fill="#fff" stroke="#fff" stroke-width="0.2" textLength="97.60" lengthAdjust="spacingAndGlyphs" >Disney parks change pricing</text>
<text x="385.20" y="130.50" font-size="7.8" fill="#fff" stroke="#fff" stroke-width="0.2" textLength="81.60" lengthAdjust="spacingAndGlyphs" >for first time in 60 years</text>
<rect x="385.20" y="137.20" width="5.60" height="5.60" fill="#d8382c" />
<rect x="386.40" y="138.20" width="1.20" height="3.60" fill="#fff" />
<rect x="388.40" y="138.20" width="1.20" height="3.60" fill="#fff" />
<text x="394.80" y="141.70" font-size="4.5" fill="#e4e4e4" stroke="#e4e4e4" stroke-width="0.06" textLength="15.20" lengthAdjust="spacingAndGlyphs" >Fortune</text>
<rect x="377.80" y="157.50" width="120.60" height="39.20" fill="#e6e6e3" />
<rect x="378.20" y="157.90" width="119.80" height="38.40" fill="#ffffff" />
<g clip-path="url(#pc3)">
<rect x="383.10" y="162.40" width="38.80" height="29.30" fill="#d6d6da" />
<g filter="url(#bl05)">
<rect x="397.10" y="162.40" width="16.00" height="22.00" fill="#3a2618" />
<rect x="412.10" y="162.40" width="10.00" height="29.30" fill="#caa987" />
<rect x="414.10" y="165.40" width="5.00" height="14.00" fill="#e0c8a8" />
<rect x="384.10" y="162.40" width="0.70" height="29.30" fill="#b8b8c0" />
<rect x="386.70" y="162.40" width="0.70" height="29.30" fill="#b8b8c0" />
<rect x="389.30" y="162.40" width="0.70" height="29.30" fill="#b8b8c0" />
<rect x="391.90" y="162.40" width="0.70" height="29.30" fill="#b8b8c0" />
<rect x="394.50" y="162.40" width="0.70" height="29.30" fill="#b8b8c0" />
<ellipse cx="402.70" cy="176.00" rx="10.00" ry="11.00" fill="#e2c48c" />
<ellipse cx="395.10" cy="182.40" rx="4.00" ry="6.00" fill="#dcc088" />
<ellipse cx="409.50" cy="182.40" rx="3.60" ry="6.00" fill="#d8b880" />
<ellipse cx="402.90" cy="175.80" rx="5.00" ry="6.60" fill="#ecc2a8" />
<ellipse cx="402.90" cy="179.20" rx="1.70" ry="0.70" fill="#c04848" />
<ellipse cx="402.70" cy="190.00" rx="14.00" ry="5.60" fill="#a6a6a8" />
<ellipse cx="402.70" cy="186.20" rx="5.00" ry="2.20" fill="#f0f0ee" />
</g></g>
<text x="426.80" y="166.60" font-size="5.3" fill="#262626" stroke="#262626" stroke-width="0.13" textLength="61.30" lengthAdjust="spacingAndGlyphs" >J.K. Rowling debunks 'Harry</text>
<text x="426.80" y="173.45" font-size="5.3" fill="#262626" stroke="#262626" stroke-width="0.13" textLength="41.30" lengthAdjust="spacingAndGlyphs" >Potter' fan theories</text>
<text x="426.80" y="190.48" font-size="4.8" fill="#19b89a" stroke="#19b89a" stroke-width="0.06" font-weight="bold" textLength="6.20" lengthAdjust="spacingAndGlyphs" >EW</text>
<text x="436.10" y="190.80" font-size="4.5" fill="#8c8c8c" stroke="#8c8c8c" stroke-width="0.06" textLength="41.20" lengthAdjust="spacingAndGlyphs" >Entertainment Weekly</text>
<rect x="503.60" y="157.50" width="120.60" height="39.20" fill="#e6e6e3" />
<rect x="504.00" y="157.90" width="119.80" height="38.40" fill="#ffffff" />
<g clip-path="url(#pc4)">
<rect x="508.90" y="162.40" width="38.80" height="29.30" fill="#ffffff" />
<g filter="url(#bl05)">
<ellipse cx="529.60" cy="167.00" rx="6.60" ry="3.00" fill="#8a86a0" />
<ellipse cx="529.00" cy="165.60" rx="3.00" ry="1.20" fill="#d8d060" />
<ellipse cx="529.00" cy="169.60" rx="6.00" ry="2.00" fill="#f0e8e0" />
<ellipse cx="528.60" cy="173.60" rx="8.60" ry="3.60" fill="#f09a58" />
<ellipse cx="529.00" cy="172.60" rx="5.00" ry="1.20" fill="#fce8d8" />
<polygon points="523.00,171.00 526.00,174.00 518.00,186.00 515.00,183.60" fill="#f0703a" />
<ellipse cx="529.40" cy="180.80" rx="9.20" ry="4.00" fill="#cc2a1a" />
<ellipse cx="527.00" cy="179.00" rx="4.00" ry="1.20" fill="#e86a50" />
<ellipse cx="527.60" cy="186.00" rx="9.00" ry="2.60" fill="#c86a28" />
<ellipse cx="520.60" cy="186.00" rx="2.60" ry="1.60" fill="#e88a30" />
<rect x="523.00" y="187.40" width="11.00" height="4.60" fill="#e8dcc8" />
<rect x="527.40" y="186.00" width="3.40" height="6.00" fill="#1a1a1a" />
</g></g>
<rect x="538.30" y="182.60" width="9.40" height="8.80" fill="#454545" />
<rect x="541.40" y="185.80" width="3.40" height="2.60" fill="#fff" />
<rect x="542.00" y="185.20" width="3.40" height="0.50" fill="#ddd" />
<text x="552.60" y="166.60" font-size="5.3" fill="#262626" stroke="#262626" stroke-width="0.13" textLength="64.10" lengthAdjust="spacingAndGlyphs" >10 Secrets of People Who've</text>
<text x="552.60" y="173.45" font-size="5.3" fill="#262626" stroke="#262626" stroke-width="0.13" textLength="27.60" lengthAdjust="spacingAndGlyphs" >Lived to 100</text>
<rect x="552.60" y="185.90" width="5.80" height="5.80" fill="#2aa8dc" />
<text x="553.90" y="190.41" font-size="4.6" fill="#fff" stroke="#fff" stroke-width="0.06" font-weight="bold" textLength="3.20" lengthAdjust="spacingAndGlyphs" >H</text>
<text x="561.90" y="190.80" font-size="4.5" fill="#8c8c8c" stroke="#8c8c8c" stroke-width="0.06" textLength="21.60" lengthAdjust="spacingAndGlyphs" >Health.com</text>
<rect x="126.40" y="202.70" width="120.60" height="39.20" fill="#e6e6e3" />
<rect x="126.80" y="203.10" width="119.80" height="38.40" fill="#ffffff" />
<text x="131.40" y="210.70" font-size="4.8" fill="#111" stroke="#111" stroke-width="0.06" font-weight="bold" textLength="50.60" lengthAdjust="spacingAndGlyphs" >BAMBERG, GERMANY</text>
<path d="M184.2 207.5 l1.7 1.6 l-1.7 1.6" stroke="#111" stroke-width="0.8" fill="none"/>
<text x="227.00" y="210.00" font-size="4.7" fill="#555" stroke="#555" stroke-width="0.06" textLength="14.30" lengthAdjust="spacingAndGlyphs" >Change</text>
<rect x="227.00" y="210.50" width="14.30" height="0.40" fill="#666" />
<text x="131.40" y="220.30" font-size="4.8" fill="#111" stroke="#111" stroke-width="0.06" font-weight="bold" textLength="16.40" lengthAdjust="spacingAndGlyphs" >MON 5</text>
<text x="171.60" y="220.30" font-size="4.8" fill="#111" stroke="#111" stroke-width="0.06" font-weight="bold" textLength="12.80" lengthAdjust="spacingAndGlyphs" >TUE 6</text>
<text x="211.00" y="220.30" font-size="4.8" fill="#111" stroke="#111" stroke-width="0.06" font-weight="bold" textLength="15.00" lengthAdjust="spacingAndGlyphs" >WED 7</text>
<rect x="166.50" y="216.00" width="0.50" height="22.80" fill="#e0e0e0" />
<rect x="205.50" y="216.00" width="0.50" height="22.80" fill="#e0e0e0" />
<polygon points="136.60,223.60 137.69,226.50 140.78,226.64 138.36,228.57 139.19,231.56 136.60,229.85 134.01,231.56 134.84,228.57 132.42,226.64 135.51,226.50" fill="#f6c21c"/>
<circle cx="136.6" cy="228" r="2.7" fill="#f9cf30"/>
<path transform="translate(135.4,228.2) scale(0.8)" d="M2.6 7.4 q-2.8 -0.2 -2.6 -2.6 q0.4 -2.2 2.8 -1.8 q0.8 -3.2 4.2 -2.8 q2.8 0.4 3.2 3 q3 -0.2 3.2 2.2 q0 2 -2.4 2 Z" fill="#fff" stroke="#b4b4b4" stroke-width="0.55"/>
<path transform="translate(172.2,226.4) scale(0.78)" d="M2.6 7.4 q-2.8 -0.2 -2.6 -2.6 q0.4 -2.2 2.8 -1.8 q0.8 -3.2 4.2 -2.8 q2.8 0.4 3.2 3 q3 -0.2 3.2 2.2 q0 2 -2.4 2 Z" fill="#fff" stroke="#b4b4b4" stroke-width="0.55"/>
<path d="M178.6 227.2 q0.8 -1.8 2.8 -1.4 q2 0.4 2 2.4 q1.8 0.2 2 1.8 q0 1.6 -1.6 1.8" stroke="#b4b4b4" stroke-width="0.55" fill="#fff"/>
<rect x="212.60" y="223.40" width="1.00" height="10.40" fill="#2a9ee0" />
<rect x="212.40" y="234.20" width="1.40" height="1.60" fill="#1e96dc" />
<rect x="216.30" y="223.40" width="1.00" height="6.60" fill="#2a9ee0" />
<circle cx="216.80" cy="231.60" r="1.0" fill="#1e96dc"/>
<rect x="220.00" y="223.40" width="1.00" height="10.40" fill="#2a9ee0" />
<rect x="219.80" y="234.20" width="1.40" height="1.60" fill="#1e96dc" />
<rect x="223.70" y="223.40" width="1.00" height="8.20" fill="#2a9ee0" />
<circle cx="224.20" cy="233.20" r="1.0" fill="#1e96dc"/>
<text x="149.60" y="227.70" font-size="5" fill="#222" stroke="#222" stroke-width="0.13" textLength="6.00" lengthAdjust="spacingAndGlyphs" >10°</text>
<text x="149.60" y="234.40" font-size="5" fill="#a4a4a4" stroke="#a4a4a4" stroke-width="0.13" textLength="6.00" lengthAdjust="spacingAndGlyphs" >11°</text>
<text x="189.60" y="227.70" font-size="5" fill="#222" stroke="#222" stroke-width="0.13" textLength="6.00" lengthAdjust="spacingAndGlyphs" >10°</text>
<text x="189.60" y="234.40" font-size="5" fill="#a4a4a4" stroke="#a4a4a4" stroke-width="0.13" textLength="6.00" lengthAdjust="spacingAndGlyphs" >12°</text>
<text x="229.00" y="227.70" font-size="5" fill="#222" stroke="#222" stroke-width="0.13" textLength="6.00" lengthAdjust="spacingAndGlyphs" >16°</text>
<text x="229.00" y="234.40" font-size="5" fill="#a4a4a4" stroke="#a4a4a4" stroke-width="0.13" textLength="3.60" lengthAdjust="spacingAndGlyphs" >9°</text>
<rect x="251.90" y="202.70" width="120.60" height="39.20" fill="#e6e6e3" />
<rect x="252.30" y="203.10" width="119.80" height="38.40" fill="#ffffff" />
<g clip-path="url(#pc5)">
<rect x="257.00" y="207.80" width="39.20" height="29.20" fill="url(#gsky)" />
<g filter="url(#bl05)">
<ellipse cx="281.00" cy="216.80" rx="10.00" ry="5.00" fill="#e8f0f6" />
<polygon points="257.00,220.80 261.00,218.40 263.00,220.40 266.00,215.80 268.60,219.80 272.00,218.80 276.00,221.80 276.00,237.00 257.00,237.00" fill="#b4303a" />
<rect x="259.40" y="222.40" width="1.80" height="2.20" fill="#d87878" />
<rect x="259.40" y="226.80" width="1.80" height="2.20" fill="#e8b8b8" />
<rect x="259.40" y="231.20" width="1.80" height="2.20" fill="#d87878" />
<rect x="263.60" y="222.40" width="1.80" height="2.20" fill="#e8b8b8" />
<rect x="263.60" y="226.80" width="1.80" height="2.20" fill="#d87878" />
<rect x="263.60" y="231.20" width="1.80" height="2.20" fill="#e8b8b8" />
<rect x="267.80" y="222.40" width="1.80" height="2.20" fill="#d87878" />
<rect x="267.80" y="226.80" width="1.80" height="2.20" fill="#e8b8b8" />
<rect x="267.80" y="231.20" width="1.80" height="2.20" fill="#d87878" />
<rect x="272.00" y="222.40" width="1.80" height="2.20" fill="#e8b8b8" />
<rect x="272.00" y="226.80" width="1.80" height="2.20" fill="#d87878" />
<rect x="272.00" y="231.20" width="1.80" height="2.20" fill="#e8b8b8" />
<rect x="257.00" y="217.80" width="2.00" height="29.20" fill="#1c1214" />
<polygon points="276.60,216.80 279.00,216.20 279.00,211.40 282.00,211.40 282.00,214.80 285.00,214.40 288.00,215.80 290.00,218.80 290.00,237.00 276.60,237.00" fill="#8c222c" />
<rect x="283.00" y="216.80" width="5.00" height="18.00" fill="#a42c34" />
<rect x="278.00" y="219.80" width="3.00" height="14.00" fill="#701820" />
<polygon points="290.00,223.80 293.00,218.80 296.40,216.80 296.40,237.00 290.00,237.00" fill="#161616" />
<rect x="257.00" y="233.40" width="39.20" height="4.00" fill="#1a1012" />
<rect x="260.00" y="232.20" width="14.00" height="2.00" fill="#6a1a20" />
</g></g>
<text x="300.90" y="211.80" font-size="5.3" fill="#262626" stroke="#262626" stroke-width="0.13" textLength="59.10" lengthAdjust="spacingAndGlyphs" >FBI, ATF Warn Philadelphia</text>
<text x="300.90" y="218.65" font-size="5.3" fill="#262626" stroke="#262626" stroke-width="0.13" textLength="60.80" lengthAdjust="spacingAndGlyphs" >Colleges Of Possible Threat</text>
<rect x="300.90" y="231.10" width="5.80" height="5.80" fill="#161616" />
<text x="301.50" y="235.05" font-size="3" fill="#fff" stroke="#fff" stroke-width="0.06" font-weight="bold" textLength="4.60" lengthAdjust="spacingAndGlyphs" >IBT</text>
<text x="310.20" y="236.00" font-size="4.5" fill="#8c8c8c" stroke="#8c8c8c" stroke-width="0.06" textLength="52.90" lengthAdjust="spacingAndGlyphs" >International Business Times</text>
<rect x="377.80" y="202.70" width="120.60" height="39.20" fill="#e6e6e3" />
<rect x="378.20" y="203.10" width="119.80" height="38.40" fill="#ffffff" />
<g clip-path="url(#pc6)">
<rect x="382.90" y="207.80" width="39.20" height="29.20" fill="#2c3a7a" />
<g filter="url(#bl05)">
<polygon points="402.90,207.80 422.10,207.80 422.10,212.40" fill="#0e0e16" />
<polygon points="401.90,207.80 404.90,207.80 422.10,211.80 422.10,213.00" fill="#d8f0ff" />
<rect x="382.90" y="207.80" width="4.00" height="29.20" fill="#222e66" />
<rect x="385.50" y="214.60" width="18.4" height="12" rx="1.6" fill="#33408a" stroke="#c8cce0" stroke-width="0.7"/>
<polygon points="393.50,215.80 398.90,215.80 400.90,225.80 392.50,225.80" fill="#eeeeee" />
<polygon points="398.90,215.80 402.90,215.80 402.90,225.80 400.90,225.80" fill="#d8403c" />
<circle cx="388.90" cy="224.20" r="0.80" fill="#fff" />
<rect x="382.90" y="230.80" width="39.20" height="7.00" fill="#1a1a2c" />
<rect x="392.90" y="232.80" width="30.00" height="3.00" fill="#4a4238" />
</g></g>
<text x="405.30" y="222.55" font-size="5" fill="#f4f4f4" stroke="#f4f4f4" stroke-width="0.06" font-weight="bold" textLength="17.40" lengthAdjust="spacingAndGlyphs" >#POSTSEAS</text>
<text x="426.80" y="211.80" font-size="5.3" fill="#262626" stroke="#262626" stroke-width="0.13" textLength="58.10" lengthAdjust="spacingAndGlyphs" >The 2015 MLB postseason</text>
<text x="426.80" y="218.65" font-size="5.3" fill="#262626" stroke="#262626" stroke-width="0.13" textLength="16.40" lengthAdjust="spacingAndGlyphs" >bracket</text>
<circle cx="429.70" cy="234.00" r="2.9" fill="#d8202c"/><path d="M428.40 232.70 l2.6 1.3 l-2.6 1.6 Z" fill="#fff"/>
<text x="436.10" y="236.00" font-size="4.5" fill="#8c8c8c" stroke="#8c8c8c" stroke-width="0.06" textLength="27.60" lengthAdjust="spacingAndGlyphs" >Sporting News</text>
<rect x="503.60" y="202.70" width="120.60" height="39.20" fill="#e6e6e3" />
<rect x="504.00" y="203.10" width="119.80" height="38.40" fill="#ffffff" />
<g clip-path="url(#pc7)">
<rect x="508.70" y="207.80" width="39.20" height="29.20" fill="#b9aaa4" />
<g filter="url(#bl05)">
<rect x="528.30" y="207.80" width="20.00" height="29.20" fill="#c9c9c9" />
<ellipse cx="518.30" cy="215.80" rx="8.00" ry="6.60" fill="#2a1c16" />
<ellipse cx="518.30" cy="221.20" rx="6.80" ry="9.00" fill="#a87a58" />
<ellipse cx="518.50" cy="229.40" rx="5.60" ry="4.00" fill="#2c1e18" />
<ellipse cx="518.50" cy="226.80" rx="2.80" ry="1.40" fill="#9a6a4c" />
<polygon points="508.70,232.80 513.70,230.40 522.70,233.80 528.30,231.80 528.30,237.00 508.70,237.00" fill="#c87a3c" />
<rect x="520.70" y="234.20" width="8.00" height="3.00" fill="#181818" />
<ellipse cx="538.30" cy="215.20" rx="10.00" ry="8.00" fill="#141414" />
<ellipse cx="530.30" cy="219.80" rx="2.40" ry="7.00" fill="#1a1a1a" />
<ellipse cx="546.70" cy="219.80" rx="2.00" ry="6.00" fill="#1a1a1a" />
<ellipse cx="538.70" cy="223.40" rx="6.60" ry="9.00" fill="#7c4c3a" />
<ellipse cx="538.70" cy="219.80" rx="4.00" ry="2.00" fill="#8e5c46" />
<polygon points="528.30,234.80 534.70,232.40 542.70,232.40 547.90,234.80 547.90,237.00 528.30,237.00" fill="#161616" />
</g></g>
<text x="552.60" y="211.80" font-size="5.3" fill="#262626" stroke="#262626" stroke-width="0.13" textLength="52.70" lengthAdjust="spacingAndGlyphs" >Drug charges filed after</text>
<text x="552.60" y="218.65" font-size="5.3" fill="#262626" stroke="#262626" stroke-width="0.13" textLength="59.90" lengthAdjust="spacingAndGlyphs" >dozens of heroin overdose</text>
<text x="552.60" y="225.50" font-size="5.3" fill="#262626" stroke="#262626" stroke-width="0.13" textLength="11.70" lengthAdjust="spacingAndGlyphs" >cases</text>
<text x="553.00" y="236.24" font-size="6.4" fill="#2a6ab8" stroke="#2a6ab8" stroke-width="0.06" font-weight="bold" textLength="4.40" lengthAdjust="spacingAndGlyphs" font-family="'Liberation Serif', serif">C</text>
<text x="561.90" y="236.00" font-size="4.5" fill="#8c8c8c" stroke="#8c8c8c" stroke-width="0.06" textLength="30.70" lengthAdjust="spacingAndGlyphs" >Chicago Tribune</text>
<rect x="126.40" y="247.90" width="120.60" height="39.20" fill="#e6e6e3" />
<rect x="126.80" y="248.30" width="119.80" height="38.40" fill="#ffffff" />
<g clip-path="url(#pc8)">
<rect x="131.00" y="253.10" width="39.40" height="29.40" fill="#6c665a" />
<g filter="url(#bl05)">
<line x1="155.00" y1="253.10" x2="170.40" y2="265.10" stroke="#2a2622" stroke-width="1" />
<line x1="170.40" y1="253.10" x2="157.00" y2="265.10" stroke="#2a2622" stroke-width="1" />
<rect x="131.00" y="258.50" width="39.40" height="0.80" fill="#3a3630" />
<rect x="131.00" y="266.10" width="39.40" height="16.40" fill="#7c161a" />
<rect x="131.00" y="253.10" width="3.00" height="29.40" fill="#1a1012" />
<rect x="140.00" y="269.10" width="7.00" height="14.00" fill="#5a1014" />
<ellipse cx="150.00" cy="255.50" rx="4.00" ry="3.00" fill="#2a1814" />
<ellipse cx="150.00" cy="258.10" rx="2.80" ry="3.40" fill="#c88c6a" />
<polygon points="135.00,259.10 140.00,257.70 160.00,257.70 162.00,260.70 153.60,281.90 150.60,281.90" fill="#d2643a" />
<polygon points="135.00,259.10 140.00,257.50 160.00,257.50 162.00,260.70 160.00,261.70 137.00,261.70" fill="#dcae6c" />
<circle cx="152.91" cy="272.69" r="1.00" fill="#f2d29a" />
<circle cx="152.32" cy="276.39" r="0.72" fill="#f2d29a" />
<circle cx="149.48" cy="277.42" r="0.83" fill="#b42a1e" />
<circle cx="146.48" cy="268.57" r="0.72" fill="#b42a1e" />
<circle cx="147.51" cy="269.04" r="1.03" fill="#a82418" />
<circle cx="155.31" cy="264.81" r="0.67" fill="#a82418" />
<circle cx="143.53" cy="264.25" r="1.04" fill="#b42a1e" />
<circle cx="153.65" cy="275.25" r="0.68" fill="#b42a1e" />
<circle cx="156.85" cy="267.02" r="0.87" fill="#b42a1e" />
<circle cx="157.66" cy="265.19" r="0.70" fill="#a82418" />
<circle cx="149.26" cy="267.18" r="0.68" fill="#b42a1e" />
<circle cx="148.81" cy="266.58" r="1.01" fill="#f2d29a" />
<circle cx="152.72" cy="272.23" r="0.63" fill="#f0c080" />
<circle cx="150.90" cy="276.01" r="0.76" fill="#a82418" />
<circle cx="147.74" cy="270.13" r="0.73" fill="#f2d29a" />
<circle cx="150.54" cy="278.24" r="0.80" fill="#a82418" />
<circle cx="151.91" cy="268.33" r="0.60" fill="#f2d29a" />
<circle cx="151.83" cy="274.13" r="1.08" fill="#f2d29a" />
<circle cx="153.58" cy="274.95" r="1.07" fill="#f0c080" />
<circle cx="154.72" cy="270.81" r="0.73" fill="#a82418" />
<circle cx="154.79" cy="263.94" r="1.00" fill="#f0c080" />
<circle cx="158.26" cy="262.72" r="0.65" fill="#f0c080" />
<circle cx="149.70" cy="270.82" r="0.67" fill="#f0c080" />
<circle cx="151.16" cy="277.81" r="0.76" fill="#f0c080" />
<circle cx="154.71" cy="267.30" r="0.91" fill="#f0c080" />
<circle cx="150.13" cy="279.04" r="0.62" fill="#a82418" />
<rect x="148.60" y="261.70" width="3.60" height="5.00" fill="#e8e0e0" />
</g></g>
<rect x="161.20" y="273.50" width="9.20" height="9.00" fill="#3c3234" />
<polygon points="164.40,275.70 168.00,278.00 164.40,280.30" fill="#fff" />
<text x="175.40" y="257.00" font-size="5.3" fill="#262626" stroke="#262626" stroke-width="0.13" textLength="56.90" lengthAdjust="spacingAndGlyphs" >Trump names his favorite</text>
<text x="175.40" y="263.85" font-size="5.3" fill="#262626" stroke="#262626" stroke-width="0.13" textLength="58.50" lengthAdjust="spacingAndGlyphs" >'SNL' Trump impersonator</text>
<text x="175.40" y="280.79" font-size="5.4" fill="#111" stroke="#111" stroke-width="0.06" font-weight="bold" textLength="6.00" lengthAdjust="spacingAndGlyphs" font-family="'Liberation Serif', serif">wp</text>
<text x="184.70" y="281.20" font-size="4.5" fill="#8c8c8c" stroke="#8c8c8c" stroke-width="0.06" textLength="39.50" lengthAdjust="spacingAndGlyphs" >The Washington Post</text>
<rect x="251.90" y="247.90" width="120.60" height="39.20" fill="#e6e6e3" />
<rect x="252.30" y="248.30" width="119.80" height="38.40" fill="#ffffff" />
<g clip-path="url(#pc9)">
<rect x="257.00" y="253.10" width="39.20" height="29.20" fill="#6f9cc6" />
<g filter="url(#bl1)">
<rect x="257.00" y="253.10" width="39.20" height="4.00" fill="#86b0d6" />
<ellipse cx="276.60" cy="259.50" rx="7.60" ry="5.00" fill="#1c3e5e" />
<ellipse cx="273.00" cy="257.70" rx="3.00" ry="2.00" fill="#3a5e82" />
<ellipse cx="261.00" cy="258.70" rx="2.60" ry="2.40" fill="#1e3c58" />
<ellipse cx="293.00" cy="258.70" rx="2.60" ry="2.40" fill="#1e3c58" />
<ellipse cx="276.60" cy="267.10" rx="12.00" ry="3.60" fill="#8ab2d4" />
<path d="M262.60 283.30 L262.60 273.10 Q264.00 265.70 276.60 269.10 Q289.00 265.70 290.60 273.10 L290.60 283.30 Z" fill="#12293e"/>
<rect x="257.00" y="263.10" width="4.60" height="29.20" fill="#a4c8e8" />
<rect x="292.00" y="263.10" width="4.60" height="29.20" fill="#a4c8e8" />
<ellipse cx="276.60" cy="272.10" rx="4.00" ry="3.00" fill="#284a68" />
</g></g>
<text x="300.90" y="257.00" font-size="5.3" fill="#262626" stroke="#262626" stroke-width="0.13" textLength="60.80" lengthAdjust="spacingAndGlyphs" >6 Things More Painful Than</text>
<text x="300.90" y="263.85" font-size="5.3" fill="#262626" stroke="#262626" stroke-width="0.13" textLength="21.80" lengthAdjust="spacingAndGlyphs" >Childbirth</text>
<rect x="300.90" y="278.70" width="5.80" height="1.00" fill="#f0441c" />
<text x="310.20" y="281.20" font-size="4.5" fill="#8c8c8c" stroke="#8c8c8c" stroke-width="0.06" textLength="24.80" lengthAdjust="spacingAndGlyphs" >Men's Health</text>
<rect x="377.80" y="247.90" width="120.60" height="39.20" fill="#e6e6e3" />
<rect x="378.20" y="248.30" width="119.80" height="38.40" fill="#ffffff" />
<g clip-path="url(#pc10)">
<rect x="382.90" y="253.10" width="39.20" height="29.20" fill="#e6d6bc" />
<g filter="url(#bl05)">
<rect x="382.90" y="253.10" width="4.00" height="29.20" fill="#3a2418" />
<rect x="382.90" y="253.10" width="16.00" height="3.40" fill="#4a3020" />
<rect x="382.90" y="273.10" width="6.00" height="2.40" fill="#4a3020" />
<rect x="415.90" y="253.10" width="7.00" height="29.20" fill="#b0aca8" />
<rect x="419.50" y="253.10" width="3.00" height="29.20" fill="#5a4030" />
<rect x="408.90" y="275.10" width="14.00" height="1.60" fill="#6a4a34" />
<rect x="385.90" y="275.10" width="10.00" height="8.00" fill="#d8c4a0" />
<polygon points="398.90,255.10 406.90,252.10 420.90,256.10 418.90,267.10 412.90,279.10 404.90,281.10 394.90,278.10 388.90,269.10 391.90,261.10" fill="#1c84d4" />
<ellipse cx="392.90" cy="261.10" rx="3.60" ry="4.40" fill="#2a8edc" />
<ellipse cx="397.90" cy="279.10" rx="3.00" ry="2.40" fill="#1878c8" />
<ellipse cx="406.90" cy="280.10" rx="3.00" ry="2.40" fill="#1878c8" />
<ellipse cx="390.90" cy="267.10" rx="2.00" ry="5.00" fill="#3a9ae4" />
<circle cx="401.70" cy="268.70" r="7.90" fill="#c98a2c" />
<circle cx="401.70" cy="268.70" r="6.80" fill="#e0a440" />
<polygon points="399.90,263.10 403.90,264.10 404.90,270.10 401.90,274.10 398.90,272.10" fill="#c48a30" />
</g></g>
<text x="426.80" y="257.00" font-size="5.3" fill="#262626" stroke="#262626" stroke-width="0.13" textLength="65.20" lengthAdjust="spacingAndGlyphs" >3 share Nobel medicine prize</text>
<text x="427.10" y="279.97" font-size="4.2" fill="#111" stroke="#111" stroke-width="0.06" font-weight="bold" textLength="5.20" lengthAdjust="spacingAndGlyphs" >AP</text>
<rect x="427.10" y="281.10" width="5.20" height="0.70" fill="#e02a2a" />
<text x="436.10" y="281.20" font-size="4.5" fill="#8c8c8c" stroke="#8c8c8c" stroke-width="0.06" textLength="31.00" lengthAdjust="spacingAndGlyphs" >Associated Press</text>
<rect x="503.60" y="247.90" width="120.60" height="39.20" fill="#e6e6e3" />
<rect x="504.00" y="248.30" width="119.80" height="38.40" fill="#ffffff" />
<g clip-path="url(#pc11)">
<rect x="508.70" y="253.10" width="39.20" height="29.20" fill="#5e5e5a" />
<g filter="url(#bl05)">
<rect x="508.70" y="253.10" width="39.20" height="4.00" fill="#4c4c48" />
<rect x="508.70" y="269.10" width="39.20" height="0.90" fill="#8a8a82" />
<rect x="508.70" y="271.50" width="39.20" height="0.90" fill="#8a8a82" />
<rect x="508.70" y="273.90" width="39.20" height="0.90" fill="#8a8a82" />
<rect x="508.70" y="276.30" width="39.20" height="0.90" fill="#8a8a82" />
<rect x="508.70" y="278.70" width="39.20" height="0.90" fill="#8a8a82" />
<rect x="508.70" y="281.10" width="39.20" height="0.90" fill="#8a8a82" />
<rect x="508.70" y="259.70" width="39.20" height="0.70" fill="#74746e" />
<rect x="508.70" y="264.70" width="39.20" height="0.70" fill="#74746e" />
<ellipse cx="526.30" cy="257.70" rx="3.20" ry="3.00" fill="#3a2a20" />
<ellipse cx="527.30" cy="258.70" rx="2.20" ry="2.40" fill="#c89a78" />
<polygon points="522.30,263.10 526.70,261.50 532.70,263.70 532.30,269.10 530.70,273.70 522.30,273.70" fill="#b6b6c0" />
<polygon points="530.70,263.10 533.70,264.70 532.10,272.10 530.30,271.10" fill="#c8c8d0" />
<rect x="522.10" y="273.50" width="9.00" height="9.40" fill="#121212" />
</g></g>
<rect x="538.30" y="273.30" width="9.60" height="9.00" fill="#3c3c3c" />
<rect x="540.70" y="276.30" width="4.80" height="3.40" fill="#fff" />
<rect x="542.10" y="275.50" width="2.00" height="1.00" fill="#fff" />
<circle cx="543.10" cy="278.00" r="1.00" fill="#3c3c3c" />
<text x="552.60" y="257.00" font-size="5.3" fill="#262626" stroke="#262626" stroke-width="0.13" textLength="58.30" lengthAdjust="spacingAndGlyphs" >The 6 Foods Every Runner</text>
<text x="552.60" y="263.85" font-size="5.3" fill="#262626" stroke="#262626" stroke-width="0.13" textLength="28.70" lengthAdjust="spacingAndGlyphs" >Needs to Eat</text>
<polygon points="555.50,276.20 556.27,278.25 558.45,278.34 556.74,279.70 557.32,281.81 555.50,280.60 553.68,281.81 554.26,279.70 552.55,278.34 554.73,278.25" fill="#f01a8c"/>
<text x="561.90" y="281.20" font-size="4.5" fill="#8c8c8c" stroke="#8c8c8c" stroke-width="0.06" textLength="18.40" lengthAdjust="spacingAndGlyphs" >PopSugar</text>
<path d="M164 200.3 L214 207.8" stroke="#ee1218" stroke-width="2" fill="none"/>
<path d="M224.8 209 L211.6 212.8 L214 203.2 Z" fill="#ee1218"/>
<path d="M235.3 210.6 L241.6 214.4 L239.2 215 L240.8 217.4 L239.8 218 L238.2 215.6 L236.6 217.4 Z" fill="#0c1c0c" stroke="#587058" stroke-width="0.35"/>
<rect x="126.10" y="293.00" width="121.10" height="106.00" fill="#e6e6e3" />
<rect x="126.50" y="293.00" width="120.30" height="105.60" fill="#fff" />
<rect x="126.50" y="293.00" width="120.30" height="2.00" fill="#4f6f9f" />
<text x="131.30" y="302.40" font-size="4.8" fill="#111" stroke="#111" stroke-width="0.06" font-weight="bold" textLength="36.40" lengthAdjust="spacingAndGlyphs" >EDITORS' PICKS</text>
<path d="M169.50 299.3 l1.6 1.5 l-1.6 1.5" stroke="#111" stroke-width="0.8" fill="none"/>
<rect x="131.30" y="308.30" width="110.00" height="0.45" fill="#e6e6e4" />
<text x="131.30" y="318.00" font-size="5.3" fill="#262626" stroke="#262626" stroke-width="0.13" textLength="91.40" lengthAdjust="spacingAndGlyphs" >Turkey says Russian warplane violated its</text>
<text x="131.30" y="325.50" font-size="5.3" fill="#262626" stroke="#262626" stroke-width="0.13" textLength="18.30" lengthAdjust="spacingAndGlyphs" >airspace</text>
<text x="155.30" y="325.50" font-size="4.4" fill="#9a9a9a" stroke="#9a9a9a" stroke-width="0.06" textLength="31.10" lengthAdjust="spacingAndGlyphs" >Associated Press</text>
<rect x="131.30" y="331.05" width="110.00" height="0.45" fill="#e6e6e4" />
<text x="131.30" y="340.75" font-size="5.3" fill="#262626" stroke="#262626" stroke-width="0.13" textLength="101.30" lengthAdjust="spacingAndGlyphs" >Saudi cash burn drives down foreign reserves</text>
<text x="131.30" y="348.25" font-size="4.4" fill="#9a9a9a" stroke="#9a9a9a" stroke-width="0.06" textLength="20.70" lengthAdjust="spacingAndGlyphs" >Bloomberg</text>
<rect x="131.30" y="353.80" width="110.00" height="0.45" fill="#e6e6e4" />
<text x="131.30" y="363.50" font-size="5.3" fill="#262626" stroke="#262626" stroke-width="0.13" textLength="96.40" lengthAdjust="spacingAndGlyphs" >Porsche in Malta motor show loses control,</text>
<text x="131.30" y="371.00" font-size="5.3" fill="#262626" stroke="#262626" stroke-width="0.13" textLength="21.70" lengthAdjust="spacingAndGlyphs" >injures 26</text>
<text x="158.20" y="371.00" font-size="4.4" fill="#9a9a9a" stroke="#9a9a9a" stroke-width="0.06" textLength="31.40" lengthAdjust="spacingAndGlyphs" >Associated Press</text>
<rect x="131.30" y="376.55" width="110.00" height="0.45" fill="#e6e6e4" />
<text x="131.30" y="390.60" font-size="5.3" fill="#262626" stroke="#262626" stroke-width="0.13" textLength="82.30" lengthAdjust="spacingAndGlyphs" >Germany 'facing 1.5 million migrants'</text>
<text x="220.20" y="390.60" font-size="4.4" fill="#9a9a9a" stroke="#9a9a9a" stroke-width="0.06" textLength="18.70" lengthAdjust="spacingAndGlyphs" >BBC News</text>
<rect x="251.60" y="293.00" width="121.10" height="106.00" fill="#e6e6e3" />
<rect x="252.00" y="293.00" width="120.30" height="105.60" fill="#fff" />
<rect x="252.00" y="293.00" width="120.30" height="2.00" fill="#5a5c9c" />
<text x="257.00" y="302.40" font-size="4.8" fill="#111" stroke="#111" stroke-width="0.06" font-weight="bold" textLength="41.30" lengthAdjust="spacingAndGlyphs" >TRENDING VIDEO</text>
<path d="M300.10 299.3 l1.6 1.5 l-1.6 1.5" stroke="#111" stroke-width="0.8" fill="none"/>
<rect x="257.00" y="308.30" width="110.00" height="0.45" fill="#e6e6e4" />
<text x="257.00" y="318.00" font-size="5.3" fill="#262626" stroke="#262626" stroke-width="0.13" textLength="90.90" lengthAdjust="spacingAndGlyphs" >Bacon Lovers Melt When They Meet Tiny</text>
<text x="257.00" y="325.50" font-size="5.3" fill="#262626" stroke="#262626" stroke-width="0.13" textLength="14.80" lengthAdjust="spacingAndGlyphs" >Piglets</text>
<text x="277.30" y="325.50" font-size="4.4" fill="#9a9a9a" stroke="#9a9a9a" stroke-width="0.06" textLength="17.70" lengthAdjust="spacingAndGlyphs" >Buzzfeed</text>
<rect x="257.00" y="331.05" width="110.00" height="0.45" fill="#e6e6e4" />
<text x="257.00" y="340.75" font-size="5.3" fill="#262626" stroke="#262626" stroke-width="0.13" textLength="104.10" lengthAdjust="spacingAndGlyphs" >Troll alert: Man discusses Edward Scissorhands</text>
<text x="257.00" y="348.25" font-size="5.3" fill="#262626" stroke="#262626" stroke-width="0.13" textLength="62.50" lengthAdjust="spacingAndGlyphs" >instead of Edward Snowden</text>
<text x="324.80" y="348.25" font-size="4.4" fill="#9a9a9a" stroke="#9a9a9a" stroke-width="0.06" textLength="28.10" lengthAdjust="spacingAndGlyphs" >NowThis News</text>
<rect x="257.00" y="353.80" width="110.00" height="0.45" fill="#e6e6e4" />
<text x="257.00" y="363.50" font-size="5.3" fill="#262626" stroke="#262626" stroke-width="0.13" textLength="94.20" lengthAdjust="spacingAndGlyphs" >Man gets manicure before holding up nail</text>
<text x="257.00" y="371.00" font-size="5.3" fill="#262626" stroke="#262626" stroke-width="0.13" textLength="12.00" lengthAdjust="spacingAndGlyphs" >salon</text>
<text x="274.30" y="371.00" font-size="4.4" fill="#9a9a9a" stroke="#9a9a9a" stroke-width="0.06" textLength="13.20" lengthAdjust="spacingAndGlyphs" >Buzz60</text>
<rect x="257.00" y="376.55" width="110.00" height="0.45" fill="#e6e6e4" />
<text x="257.00" y="390.60" font-size="5.3" fill="#262626" stroke="#262626" stroke-width="0.13" textLength="75.20" lengthAdjust="spacingAndGlyphs" >Dogs 'victims of Greek debt crisis'</text>
<text x="338.00" y="390.60" font-size="4.4" fill="#9a9a9a" stroke="#9a9a9a" stroke-width="0.06" textLength="19.00" lengthAdjust="spacingAndGlyphs" >BBC News</text>
<rect x="377.50" y="293.00" width="121.10" height="106.00" fill="#e6e6e3" />
<rect x="377.90" y="293.00" width="120.30" height="105.60" fill="#fff" />
<rect x="377.90" y="293.00" width="120.30" height="2.00" fill="#c9305e" />
<text x="383.00" y="302.40" font-size="4.8" fill="#111" stroke="#111" stroke-width="0.06" font-weight="bold" textLength="22.30" lengthAdjust="spacingAndGlyphs" >NFL BUZZ</text>
<path d="M407.10 299.3 l1.6 1.5 l-1.6 1.5" stroke="#111" stroke-width="0.8" fill="none"/>
<rect x="383.00" y="308.30" width="110.00" height="0.45" fill="#e6e6e4" />
<text x="383.00" y="318.00" font-size="5.3" fill="#262626" stroke="#262626" stroke-width="0.13" textLength="108.30" lengthAdjust="spacingAndGlyphs" >Fan collapses during Bengals game, pronounced</text>
<text x="383.00" y="325.50" font-size="5.3" fill="#262626" stroke="#262626" stroke-width="0.13" textLength="11.00" lengthAdjust="spacingAndGlyphs" >dead</text>
<text x="399.50" y="325.50" font-size="4.4" fill="#9a9a9a" stroke="#9a9a9a" stroke-width="0.06" textLength="31.40" lengthAdjust="spacingAndGlyphs" >Associated Press</text>
<rect x="383.00" y="331.05" width="110.00" height="0.45" fill="#e6e6e4" />
<text x="383.00" y="340.75" font-size="5.3" fill="#262626" stroke="#262626" stroke-width="0.13" textLength="93.90" lengthAdjust="spacingAndGlyphs" >Which undefeated NFL teams are for real?</text>
<text x="482.20" y="340.75" font-size="4.4" fill="#9a9a9a" stroke="#9a9a9a" stroke-width="0.06" textLength="8.20" lengthAdjust="spacingAndGlyphs" >USA</text>
<text x="383.00" y="348.25" font-size="4.4" fill="#9a9a9a" stroke="#9a9a9a" stroke-width="0.06" textLength="24.80" lengthAdjust="spacingAndGlyphs" >Today Sports</text>
<rect x="383.00" y="353.80" width="110.00" height="0.45" fill="#e6e6e4" />
<text x="383.00" y="367.60" font-size="5.3" fill="#262626" stroke="#262626" stroke-width="0.13" textLength="42.90" lengthAdjust="spacingAndGlyphs" >Week 4: Top 5 runs</text>
<text x="431.20" y="367.60" font-size="4.4" fill="#9a9a9a" stroke="#9a9a9a" stroke-width="0.06" textLength="7.20" lengthAdjust="spacingAndGlyphs" >NFL</text>
<rect x="383.00" y="376.55" width="110.00" height="0.45" fill="#e6e6e4" />
<text x="383.00" y="386.25" font-size="5.3" fill="#262626" stroke="#262626" stroke-width="0.13" textLength="92.90" lengthAdjust="spacingAndGlyphs" >Lions' Suh leaves 'em laughing after press</text>
<text x="383.00" y="393.75" font-size="5.3" fill="#262626" stroke="#262626" stroke-width="0.13" textLength="41.30" lengthAdjust="spacingAndGlyphs" >conference (video)</text>
<text x="430.10" y="393.75" font-size="4.4" fill="#9a9a9a" stroke="#9a9a9a" stroke-width="0.06" textLength="7.20" lengthAdjust="spacingAndGlyphs" >NFL</text>
<rect x="503.30" y="293.00" width="121.10" height="106.00" fill="#e6e6e3" />
<rect x="503.70" y="293.00" width="120.30" height="105.60" fill="#fff" />
<rect x="503.70" y="293.00" width="120.30" height="2.00" fill="#4e4e4e" />
<text x="509.00" y="302.40" font-size="4.8" fill="#111" stroke="#111" stroke-width="0.06" font-weight="bold" textLength="44.30" lengthAdjust="spacingAndGlyphs" >WEEKEND REWIND</text>
<path d="M555.10 299.3 l1.6 1.5 l-1.6 1.5" stroke="#111" stroke-width="0.8" fill="none"/>
<rect x="509.00" y="308.30" width="110.00" height="0.45" fill="#e6e6e4" />
<text x="509.00" y="318.00" font-size="5.3" fill="#262626" stroke="#262626" stroke-width="0.13" textLength="95.50" lengthAdjust="spacingAndGlyphs" >Warren Jeffs' son opens up about secretive</text>
<text x="509.00" y="325.50" font-size="5.3" fill="#262626" stroke="#262626" stroke-width="0.13" textLength="37.70" lengthAdjust="spacingAndGlyphs" >polygamous sect</text>
<text x="552.30" y="325.50" font-size="4.4" fill="#9a9a9a" stroke="#9a9a9a" stroke-width="0.06" textLength="31.10" lengthAdjust="spacingAndGlyphs" >Associated Press</text>
<rect x="509.00" y="331.05" width="110.00" height="0.45" fill="#e6e6e4" />
<text x="509.00" y="340.75" font-size="5.3" fill="#262626" stroke="#262626" stroke-width="0.13" textLength="108.30" lengthAdjust="spacingAndGlyphs" >Prince William rescues seriously injured girl from</text>
<text x="509.00" y="348.25" font-size="5.3" fill="#262626" stroke="#262626" stroke-width="0.13" textLength="19.80" lengthAdjust="spacingAndGlyphs" >car crash</text>
<text x="534.10" y="348.25" font-size="4.4" fill="#9a9a9a" stroke="#9a9a9a" stroke-width="0.06" textLength="22.80" lengthAdjust="spacingAndGlyphs" >Wondersvall</text>
<rect x="509.00" y="353.80" width="110.00" height="0.45" fill="#e6e6e4" />
<text x="509.00" y="363.50" font-size="5.3" fill="#262626" stroke="#262626" stroke-width="0.13" textLength="99.20" lengthAdjust="spacingAndGlyphs" >Attorneys: Robin Williams' widow, kids settle</text>
<text x="509.00" y="371.00" font-size="5.3" fill="#262626" stroke="#262626" stroke-width="0.13" textLength="24.80" lengthAdjust="spacingAndGlyphs" >estate fight</text>
<text x="539.50" y="371.00" font-size="4.4" fill="#9a9a9a" stroke="#9a9a9a" stroke-width="0.06" textLength="31.40" lengthAdjust="spacingAndGlyphs" >Associated Press</text>
<rect x="509.00" y="376.55" width="110.00" height="0.45" fill="#e6e6e4" />
<text x="509.00" y="386.25" font-size="5.3" fill="#262626" stroke="#262626" stroke-width="0.13" textLength="98.30" lengthAdjust="spacingAndGlyphs" >Farmer uncovers 11,000-year-old mammoth</text>
<text x="509.00" y="393.75" font-size="5.3" fill="#262626" stroke="#262626" stroke-width="0.13" textLength="14.80" lengthAdjust="spacingAndGlyphs" >(video)</text>
<text x="529.60" y="393.75" font-size="4.4" fill="#9a9a9a" stroke="#9a9a9a" stroke-width="0.06" textLength="9.00" lengthAdjust="spacingAndGlyphs" >CNN</text>
</svg>
</body></html>
